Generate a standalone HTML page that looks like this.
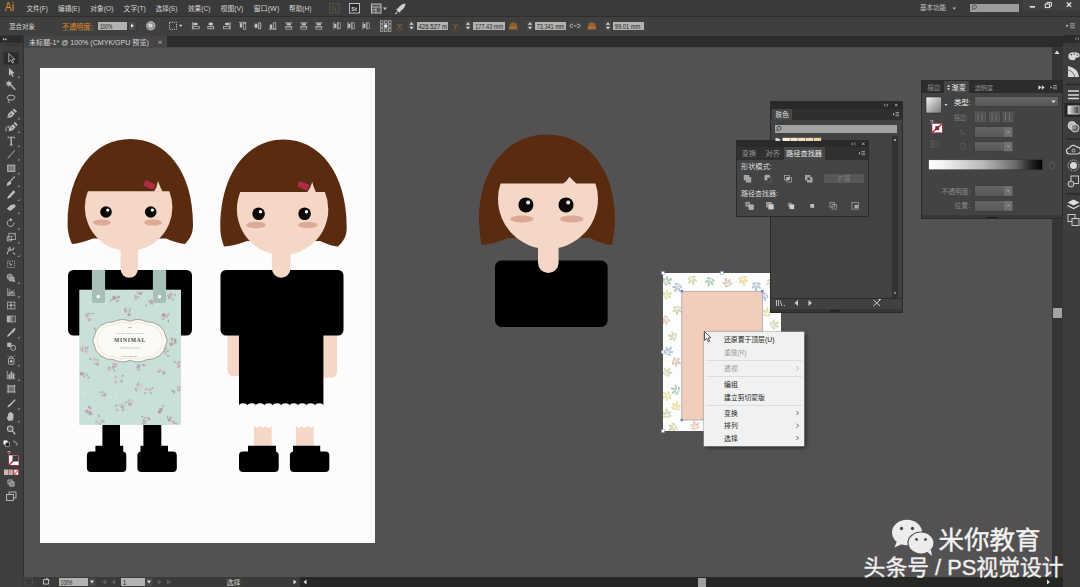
<!DOCTYPE html>
<html lang="zh"><head><meta charset="utf-8"><title>Adobe Illustrator</title>
<style>
html,body{margin:0;padding:0;background:#535152;}
body{width:1080px;height:587px;overflow:hidden;position:relative;font-family:"Liberation Sans",sans-serif;}
#app{position:absolute;left:0;top:0;width:1080px;height:587px;overflow:hidden;background:#535152;}
.abs{position:absolute;}
#menubar{left:0;top:0;width:1080px;height:16px;background:#3a3a3a;}
#ctrlbar{left:0;top:16px;width:1080px;height:19.5px;background:#3f403e;border-top:1px solid #2e2e2e;box-sizing:border-box;}
#tabbar{left:22px;top:35.5px;width:1041px;height:11.5px;background:#2c2c2c;}
#doctab{left:24px;top:36.3px;width:142.5px;height:11px;background:#454545;}
#tabline{left:23px;top:47px;width:1029px;height:1px;background:#474747;}
#toolbar{left:0;top:35px;width:22.5px;height:552px;background:#3e3e3e;border-right:1px solid #303030;}
#canvas{left:23px;top:47px;width:1030px;height:528px;background:#535152;}
#artboard{left:39.8px;top:68.3px;width:335.6px;height:475.2px;background:#fdfbfb;}
#vscroll{left:1052px;top:47px;width:11px;height:529.5px;background:#353535;}
#dock{left:1063px;top:35px;width:17px;height:552px;background:#3d3d3d;}
#statusbar{left:23px;top:576.5px;width:1040px;height:10.5px;background:#242723;}
#statusl{left:23px;top:576.5px;width:277px;height:10.5px;background:#3a3b39;}
.inp{background:#b2b2b2;color:#101010;font-family:"Liberation Mono",monospace;font-size:6.6px;font-weight:bold;letter-spacing:-0.3px;line-height:9px;height:8.8px;overflow:hidden;white-space:nowrap;box-sizing:border-box;padding-left:1px;}
.panel{background:#434343;box-shadow:0 0 0 1px #2a2a2a;}
.dd{background:linear-gradient(#646464,#585858);box-shadow:0 0 0 0.5px #3a3a3a;}
#ctx{left:703.5px;top:331.5px;width:100.5px;height:114px;background:#f1f1f1;box-shadow:0 0 0 0.5px #a9a9a9, 2px 2px 4px rgba(0,0,0,.5);}
.sep{position:absolute;left:2px;right:2px;height:1px;background:#dcdcdc;}
svg{position:absolute;left:0;top:0;overflow:visible;}
</style></head><body><div id="app">
<div id="canvas" class="abs"></div><div id="artboard" class="abs"></div><div id="vscroll" class="abs"><div class="abs" style="left:1px;top:260.5px;width:9px;height:10px;background:#a3a3a3"></div></div><div id="menubar" class="abs"></div><div id="ctrlbar" class="abs"></div><div id="tabbar" class="abs"></div><div id="doctab" class="abs"></div><div id="tabline" class="abs"></div><div id="toolbar" class="abs"></div><div id="dock" class="abs"></div><div id="statusbar" class="abs"></div><div id="statusl" class="abs"></div><svg width="1080" height="587" viewBox="0 0 1080 587"><defs><clipPath id="cf"><rect x="-80" y="52" width="160" height="100"/></clipPath><linearGradient id="gsw" x1="0" y1="0" x2="1" y2="1"><stop offset="0" stop-color="#f4f4f4"/><stop offset="1" stop-color="#777"/></linearGradient><linearGradient id="gbar" x1="0" y1="0" x2="1" y2="0"><stop offset="0" stop-color="#fff"/><stop offset="0.12" stop-color="#f4f4f4"/><stop offset="0.5" stop-color="#b4b4b4"/><stop offset="0.76" stop-color="#6c6c6c"/><stop offset="0.9" stop-color="#262626"/><stop offset="1" stop-color="#000"/></linearGradient><clipPath id="cap"><rect x="79.3" y="289.7" width="101.700" height="135.300"/></clipPath><clipPath id="cpat"><rect x="663" y="273" width="118" height="158"/></clipPath></defs><g id="girl1"><rect x="102.4" y="420" width="17.6" height="30" fill="#000"/><rect x="143.4" y="420" width="17.9" height="30" fill="#000"/><path fill="#000" d="M95.4,445.8 H123.2 V451.5 H122.3 a4,4 0 0 1 4,4 V468 a4,4 0 0 1 -4,4 H90.9 a4,4 0 0 1 -4,-4 V455.5 a4,4 0 0 1 4,-4 H95.4Z"/><path fill="#000" d="M140.5,445.8 H168 V451.5 H172.8 a4,4 0 0 1 4,4 V468 a4,4 0 0 1 -4,4 H141.4 a4,4 0 0 1 -4,-4 V455.5 a4,4 0 0 1 4,-4 H140.5Z"/><rect x="68" y="270" width="124" height="65.5" rx="5.5" fill="#000"/><rect x="79.300" y="289.700" width="101.700" height="135.300" fill="#c9dfd9"/><g clip-path="url(#cap)"><circle cx="87.8" cy="316.1" r="1.0" fill="#cfaab8" opacity="0.85"/><circle cx="89.4" cy="319.8" r="1.8" fill="#c9a3b3" opacity="0.85"/><circle cx="86.8" cy="316.8" r="1.3" fill="#d4b3c0" opacity="0.85"/><circle cx="86.7" cy="315.4" r="1.4" fill="#d4b3c0" opacity="0.85"/><circle cx="87.3" cy="319.4" r="1.1" fill="#dcc3cc" opacity="0.85"/><ellipse cx="92.7" cy="313.7" rx="1.5" ry="0.7" fill="#9db3a5" transform="rotate(158 92.7 313.7)"/><ellipse cx="89.1" cy="313.7" rx="1.5" ry="0.7" fill="#9db3a5" transform="rotate(1 89.1 313.7)"/><ellipse cx="86.8" cy="314.4" rx="1.5" ry="0.7" fill="#9db3a5" transform="rotate(42 86.8 314.4)"/><circle cx="135.8" cy="298.0" r="1.8" fill="#cfaab8" opacity="0.85"/><circle cx="138.4" cy="293.0" r="1.9" fill="#d4b3c0" opacity="0.85"/><circle cx="140.4" cy="293.7" r="1.4" fill="#bf92a6" opacity="0.85"/><ellipse cx="141.8" cy="292.9" rx="1.5" ry="0.7" fill="#9db3a5" transform="rotate(84 141.8 292.9)"/><ellipse cx="135.4" cy="295.9" rx="1.5" ry="0.7" fill="#9db3a5" transform="rotate(0 135.4 295.9)"/><ellipse cx="138.4" cy="296.9" rx="1.5" ry="0.7" fill="#9db3a5" transform="rotate(16 138.4 296.9)"/><circle cx="162.9" cy="315.8" r="1.2" fill="#bf92a6" opacity="0.85"/><circle cx="163.8" cy="314.9" r="1.9" fill="#bf92a6" opacity="0.85"/><circle cx="160.4" cy="318.6" r="1.0" fill="#dcc3cc" opacity="0.85"/><circle cx="166.2" cy="316.1" r="1.8" fill="#cfaab8" opacity="0.85"/><ellipse cx="163.5" cy="318.9" rx="1.5" ry="0.7" fill="#9db3a5" transform="rotate(159 163.5 318.9)"/><ellipse cx="168.6" cy="314.3" rx="1.5" ry="0.7" fill="#9db3a5" transform="rotate(62 168.6 314.3)"/><ellipse cx="168.3" cy="321.0" rx="1.5" ry="0.7" fill="#9db3a5" transform="rotate(88 168.3 321.0)"/><circle cx="113.9" cy="299.7" r="1.1" fill="#dcc3cc" opacity="0.85"/><circle cx="116.9" cy="301.4" r="1.0" fill="#bf92a6" opacity="0.85"/><circle cx="118.4" cy="296.9" r="1.5" fill="#bf92a6" opacity="0.85"/><circle cx="114.0" cy="297.2" r="1.8" fill="#bf92a6" opacity="0.85"/><circle cx="115.3" cy="298.3" r="1.3" fill="#bf92a6" opacity="0.85"/><ellipse cx="118.0" cy="300.6" rx="1.5" ry="0.7" fill="#9db3a5" transform="rotate(176 118.0 300.6)"/><ellipse cx="113.1" cy="299.4" rx="1.5" ry="0.7" fill="#9db3a5" transform="rotate(12 113.1 299.4)"/><ellipse cx="110.8" cy="300.4" rx="1.5" ry="0.7" fill="#9db3a5" transform="rotate(103 110.8 300.4)"/><circle cx="169.5" cy="297.6" r="1.4" fill="#bf92a6" opacity="0.85"/><circle cx="170.9" cy="294.2" r="1.7" fill="#c9a3b3" opacity="0.85"/><circle cx="170.2" cy="295.1" r="1.9" fill="#cfaab8" opacity="0.85"/><ellipse cx="172.8" cy="299.6" rx="1.5" ry="0.7" fill="#9db3a5" transform="rotate(27 172.8 299.6)"/><ellipse cx="168.2" cy="295.9" rx="1.5" ry="0.7" fill="#9db3a5" transform="rotate(15 168.2 295.9)"/><ellipse cx="174.9" cy="295.2" rx="1.5" ry="0.7" fill="#9db3a5" transform="rotate(116 174.9 295.2)"/><circle cx="86.7" cy="352.0" r="1.9" fill="#dcc3cc" opacity="0.85"/><circle cx="85.4" cy="347.8" r="1.3" fill="#bf92a6" opacity="0.85"/><circle cx="83.3" cy="346.7" r="1.7" fill="#dcc3cc" opacity="0.85"/><circle cx="84.2" cy="346.9" r="1.8" fill="#dcc3cc" opacity="0.85"/><circle cx="81.6" cy="348.9" r="1.7" fill="#cfaab8" opacity="0.85"/><ellipse cx="87.7" cy="347.8" rx="1.5" ry="0.7" fill="#9db3a5" transform="rotate(91 87.7 347.8)"/><ellipse cx="85.9" cy="350.5" rx="1.5" ry="0.7" fill="#9db3a5" transform="rotate(78 85.9 350.5)"/><ellipse cx="82.6" cy="350.8" rx="1.5" ry="0.7" fill="#9db3a5" transform="rotate(71 82.6 350.8)"/><circle cx="171.2" cy="344.1" r="1.9" fill="#bf92a6" opacity="0.85"/><circle cx="171.8" cy="338.9" r="1.4" fill="#c9a3b3" opacity="0.85"/><circle cx="175.1" cy="339.9" r="1.4" fill="#bf92a6" opacity="0.85"/><circle cx="175.4" cy="341.9" r="1.3" fill="#bf92a6" opacity="0.85"/><ellipse cx="174.4" cy="343.1" rx="1.5" ry="0.7" fill="#9db3a5" transform="rotate(104 174.4 343.1)"/><ellipse cx="171.5" cy="344.1" rx="1.5" ry="0.7" fill="#9db3a5" transform="rotate(176 171.5 344.1)"/><ellipse cx="172.5" cy="339.8" rx="1.5" ry="0.7" fill="#9db3a5" transform="rotate(85 172.5 339.8)"/><circle cx="109.3" cy="369.1" r="1.8" fill="#d4b3c0" opacity="0.85"/><circle cx="115.3" cy="365.9" r="1.6" fill="#c9a3b3" opacity="0.85"/><circle cx="113.8" cy="363.9" r="1.5" fill="#cfaab8" opacity="0.85"/><circle cx="115.3" cy="364.7" r="1.7" fill="#cfaab8" opacity="0.85"/><circle cx="113.0" cy="367.4" r="1.2" fill="#c9a3b3" opacity="0.85"/><ellipse cx="112.9" cy="367.1" rx="1.5" ry="0.7" fill="#9db3a5" transform="rotate(46 112.9 367.1)"/><ellipse cx="109.2" cy="367.7" rx="1.5" ry="0.7" fill="#9db3a5" transform="rotate(161 109.2 367.7)"/><ellipse cx="114.2" cy="370.4" rx="1.5" ry="0.7" fill="#9db3a5" transform="rotate(57 114.2 370.4)"/><circle cx="81.6" cy="373.7" r="1.9" fill="#bf92a6" opacity="0.85"/><circle cx="84.9" cy="376.3" r="1.4" fill="#dcc3cc" opacity="0.85"/><circle cx="84.1" cy="376.7" r="1.2" fill="#cfaab8" opacity="0.85"/><ellipse cx="87.2" cy="374.9" rx="1.5" ry="0.7" fill="#9db3a5" transform="rotate(89 87.2 374.9)"/><ellipse cx="84.1" cy="374.0" rx="1.5" ry="0.7" fill="#9db3a5" transform="rotate(104 84.1 374.0)"/><ellipse cx="88.7" cy="377.7" rx="1.5" ry="0.7" fill="#9db3a5" transform="rotate(140 88.7 377.7)"/><circle cx="163.5" cy="372.3" r="1.1" fill="#bf92a6" opacity="0.85"/><circle cx="160.3" cy="371.0" r="1.3" fill="#cfaab8" opacity="0.85"/><circle cx="158.9" cy="369.6" r="1.7" fill="#dcc3cc" opacity="0.85"/><circle cx="161.1" cy="371.2" r="1.1" fill="#d4b3c0" opacity="0.85"/><ellipse cx="158.8" cy="371.8" rx="1.5" ry="0.7" fill="#9db3a5" transform="rotate(50 158.8 371.8)"/><ellipse cx="164.7" cy="373.0" rx="1.5" ry="0.7" fill="#9db3a5" transform="rotate(89 164.7 373.0)"/><ellipse cx="163.2" cy="373.5" rx="1.5" ry="0.7" fill="#9db3a5" transform="rotate(97 163.2 373.5)"/><circle cx="136.1" cy="388.7" r="1.1" fill="#cfaab8" opacity="0.85"/><circle cx="138.4" cy="388.5" r="1.4" fill="#dcc3cc" opacity="0.85"/><circle cx="141.0" cy="386.0" r="1.9" fill="#dcc3cc" opacity="0.85"/><ellipse cx="136.2" cy="390.2" rx="1.5" ry="0.7" fill="#9db3a5" transform="rotate(40 136.2 390.2)"/><ellipse cx="138.4" cy="383.8" rx="1.5" ry="0.7" fill="#9db3a5" transform="rotate(77 138.4 383.8)"/><ellipse cx="137.4" cy="385.2" rx="1.5" ry="0.7" fill="#9db3a5" transform="rotate(81 137.4 385.2)"/><circle cx="176.9" cy="362.6" r="1.0" fill="#dcc3cc" opacity="0.85"/><circle cx="178.2" cy="366.9" r="1.3" fill="#d4b3c0" opacity="0.85"/><circle cx="179.1" cy="366.1" r="1.4" fill="#c9a3b3" opacity="0.85"/><circle cx="177.5" cy="362.4" r="1.7" fill="#dcc3cc" opacity="0.85"/><ellipse cx="174.5" cy="361.9" rx="1.5" ry="0.7" fill="#9db3a5" transform="rotate(39 174.5 361.9)"/><ellipse cx="179.2" cy="362.1" rx="1.5" ry="0.7" fill="#9db3a5" transform="rotate(126 179.2 362.1)"/><ellipse cx="178.1" cy="363.8" rx="1.5" ry="0.7" fill="#9db3a5" transform="rotate(165 178.1 363.8)"/><circle cx="91.2" cy="413.5" r="1.7" fill="#c9a3b3" opacity="0.85"/><circle cx="86.8" cy="411.2" r="1.6" fill="#bf92a6" opacity="0.85"/><circle cx="90.1" cy="408.0" r="1.3" fill="#bf92a6" opacity="0.85"/><circle cx="90.2" cy="411.6" r="1.0" fill="#c9a3b3" opacity="0.85"/><circle cx="88.7" cy="412.2" r="1.8" fill="#c9a3b3" opacity="0.85"/><ellipse cx="88.8" cy="406.6" rx="1.5" ry="0.7" fill="#9db3a5" transform="rotate(109 88.8 406.6)"/><ellipse cx="89.2" cy="412.7" rx="1.5" ry="0.7" fill="#9db3a5" transform="rotate(161 89.2 412.7)"/><ellipse cx="89.8" cy="414.2" rx="1.5" ry="0.7" fill="#9db3a5" transform="rotate(98 89.8 414.2)"/><circle cx="159.2" cy="412.3" r="1.8" fill="#d4b3c0" opacity="0.85"/><circle cx="159.7" cy="411.7" r="1.8" fill="#bf92a6" opacity="0.85"/><circle cx="161.5" cy="409.6" r="1.6" fill="#bf92a6" opacity="0.85"/><circle cx="159.8" cy="408.8" r="1.4" fill="#d4b3c0" opacity="0.85"/><ellipse cx="160.5" cy="410.0" rx="1.5" ry="0.7" fill="#9db3a5" transform="rotate(84 160.5 410.0)"/><ellipse cx="160.4" cy="409.3" rx="1.5" ry="0.7" fill="#9db3a5" transform="rotate(138 160.4 409.3)"/><ellipse cx="163.1" cy="406.1" rx="1.5" ry="0.7" fill="#9db3a5" transform="rotate(58 163.1 406.1)"/><circle cx="123.0" cy="409.9" r="1.3" fill="#c9a3b3" opacity="0.85"/><circle cx="120.1" cy="405.2" r="1.6" fill="#dcc3cc" opacity="0.85"/><circle cx="117.2" cy="410.2" r="1.6" fill="#d4b3c0" opacity="0.85"/><circle cx="123.1" cy="405.5" r="1.9" fill="#d4b3c0" opacity="0.85"/><ellipse cx="122.7" cy="407.4" rx="1.5" ry="0.7" fill="#9db3a5" transform="rotate(46 122.7 407.4)"/><ellipse cx="121.7" cy="407.2" rx="1.5" ry="0.7" fill="#9db3a5" transform="rotate(41 121.7 407.2)"/><ellipse cx="116.3" cy="405.4" rx="1.5" ry="0.7" fill="#9db3a5" transform="rotate(142 116.3 405.4)"/><circle cx="105.2" cy="395.6" r="1.1" fill="#bf92a6" opacity="0.85"/><circle cx="104.6" cy="395.6" r="1.1" fill="#cfaab8" opacity="0.85"/><circle cx="103.5" cy="392.8" r="1.4" fill="#cfaab8" opacity="0.85"/><ellipse cx="102.5" cy="395.4" rx="1.5" ry="0.7" fill="#9db3a5" transform="rotate(14 102.5 395.4)"/><ellipse cx="100.4" cy="392.2" rx="1.5" ry="0.7" fill="#9db3a5" transform="rotate(145 100.4 392.2)"/><ellipse cx="105.3" cy="394.1" rx="1.5" ry="0.7" fill="#9db3a5" transform="rotate(142 105.3 394.1)"/><circle cx="177.9" cy="387.5" r="1.2" fill="#cfaab8" opacity="0.85"/><circle cx="179.5" cy="387.6" r="1.7" fill="#d4b3c0" opacity="0.85"/><circle cx="179.8" cy="388.7" r="1.2" fill="#dcc3cc" opacity="0.85"/><circle cx="178.6" cy="390.0" r="1.5" fill="#c9a3b3" opacity="0.85"/><circle cx="173.5" cy="391.3" r="1.5" fill="#cfaab8" opacity="0.85"/><ellipse cx="174.4" cy="392.4" rx="1.5" ry="0.7" fill="#9db3a5" transform="rotate(122 174.4 392.4)"/><ellipse cx="181.6" cy="385.5" rx="1.5" ry="0.7" fill="#9db3a5" transform="rotate(135 181.6 385.5)"/><ellipse cx="172.3" cy="391.0" rx="1.5" ry="0.7" fill="#9db3a5" transform="rotate(13 172.3 391.0)"/><circle cx="144.4" cy="365.5" r="1.7" fill="#d4b3c0" opacity="0.85"/><circle cx="137.8" cy="368.6" r="1.7" fill="#dcc3cc" opacity="0.85"/><circle cx="138.3" cy="366.8" r="1.8" fill="#bf92a6" opacity="0.85"/><ellipse cx="138.9" cy="369.9" rx="1.5" ry="0.7" fill="#9db3a5" transform="rotate(180 138.9 369.9)"/><ellipse cx="139.5" cy="365.0" rx="1.5" ry="0.7" fill="#9db3a5" transform="rotate(34 139.5 365.0)"/><ellipse cx="143.2" cy="364.7" rx="1.5" ry="0.7" fill="#9db3a5" transform="rotate(75 143.2 364.7)"/><circle cx="97.5" cy="334.3" r="1.0" fill="#cfaab8" opacity="0.85"/><circle cx="101.7" cy="330.2" r="1.4" fill="#d4b3c0" opacity="0.85"/><circle cx="94.9" cy="329.0" r="1.2" fill="#d4b3c0" opacity="0.85"/><circle cx="97.9" cy="334.8" r="1.0" fill="#bf92a6" opacity="0.85"/><circle cx="97.8" cy="334.5" r="1.8" fill="#cfaab8" opacity="0.85"/><ellipse cx="96.2" cy="331.7" rx="1.5" ry="0.7" fill="#9db3a5" transform="rotate(49 96.2 331.7)"/><ellipse cx="94.5" cy="328.9" rx="1.5" ry="0.7" fill="#9db3a5" transform="rotate(95 94.5 328.9)"/><ellipse cx="101.7" cy="335.3" rx="1.5" ry="0.7" fill="#9db3a5" transform="rotate(120 101.7 335.3)"/><circle cx="150.4" cy="301.5" r="1.7" fill="#d4b3c0" opacity="0.85"/><circle cx="151.3" cy="301.0" r="1.3" fill="#c9a3b3" opacity="0.85"/><circle cx="151.9" cy="302.8" r="1.6" fill="#c9a3b3" opacity="0.85"/><ellipse cx="151.7" cy="303.7" rx="1.5" ry="0.7" fill="#9db3a5" transform="rotate(39 151.7 303.7)"/><ellipse cx="146.2" cy="305.5" rx="1.5" ry="0.7" fill="#9db3a5" transform="rotate(74 146.2 305.5)"/><ellipse cx="149.5" cy="301.7" rx="1.5" ry="0.7" fill="#9db3a5" transform="rotate(41 149.5 301.7)"/><circle cx="125.7" cy="309.0" r="1.6" fill="#d4b3c0" opacity="0.85"/><circle cx="128.9" cy="314.6" r="1.6" fill="#bf92a6" opacity="0.85"/><circle cx="125.6" cy="311.1" r="1.7" fill="#c9a3b3" opacity="0.85"/><ellipse cx="130.2" cy="309.0" rx="1.5" ry="0.7" fill="#9db3a5" transform="rotate(61 130.2 309.0)"/><ellipse cx="124.8" cy="309.4" rx="1.5" ry="0.7" fill="#9db3a5" transform="rotate(11 124.8 309.4)"/><ellipse cx="129.5" cy="311.4" rx="1.5" ry="0.7" fill="#9db3a5" transform="rotate(69 129.5 311.4)"/><circle cx="99.7" cy="419.7" r="1.2" fill="#dcc3cc" opacity="0.85"/><circle cx="96.5" cy="422.1" r="1.5" fill="#cfaab8" opacity="0.85"/><circle cx="103.3" cy="421.4" r="1.8" fill="#d4b3c0" opacity="0.85"/><ellipse cx="99.9" cy="423.9" rx="1.5" ry="0.7" fill="#9db3a5" transform="rotate(13 99.9 423.9)"/><ellipse cx="101.8" cy="421.3" rx="1.5" ry="0.7" fill="#9db3a5" transform="rotate(127 101.8 421.3)"/><ellipse cx="99.0" cy="416.0" rx="1.5" ry="0.7" fill="#9db3a5" transform="rotate(65 99.0 416.0)"/><circle cx="144.6" cy="421.9" r="1.9" fill="#c9a3b3" opacity="0.85"/><circle cx="142.7" cy="422.3" r="1.2" fill="#dcc3cc" opacity="0.85"/><circle cx="143.0" cy="423.7" r="1.1" fill="#c9a3b3" opacity="0.85"/><circle cx="148.7" cy="418.8" r="1.8" fill="#c9a3b3" opacity="0.85"/><ellipse cx="142.1" cy="416.7" rx="1.5" ry="0.7" fill="#9db3a5" transform="rotate(138 142.1 416.7)"/><ellipse cx="143.6" cy="420.3" rx="1.5" ry="0.7" fill="#9db3a5" transform="rotate(96 143.6 420.3)"/><ellipse cx="145.2" cy="417.7" rx="1.5" ry="0.7" fill="#9db3a5" transform="rotate(3 145.2 417.7)"/><circle cx="173.4" cy="422.5" r="1.5" fill="#d4b3c0" opacity="0.85"/><circle cx="169.3" cy="419.9" r="1.7" fill="#bf92a6" opacity="0.85"/><circle cx="170.6" cy="417.6" r="1.4" fill="#c9a3b3" opacity="0.85"/><circle cx="173.5" cy="421.9" r="1.6" fill="#cfaab8" opacity="0.85"/><ellipse cx="169.8" cy="419.9" rx="1.5" ry="0.7" fill="#9db3a5" transform="rotate(63 169.8 419.9)"/><ellipse cx="167.5" cy="417.3" rx="1.5" ry="0.7" fill="#9db3a5" transform="rotate(73 167.5 417.3)"/><ellipse cx="175.8" cy="423.5" rx="1.5" ry="0.7" fill="#9db3a5" transform="rotate(18 175.8 423.5)"/><circle cx="133.0" cy="401.2" r="1.0" fill="#cfaab8" opacity="0.85"/><circle cx="129.4" cy="404.8" r="1.5" fill="#d4b3c0" opacity="0.85"/><circle cx="130.6" cy="404.0" r="1.7" fill="#c9a3b3" opacity="0.85"/><circle cx="132.5" cy="400.5" r="1.5" fill="#dcc3cc" opacity="0.85"/><ellipse cx="129.2" cy="400.3" rx="1.5" ry="0.7" fill="#9db3a5" transform="rotate(35 129.2 400.3)"/><ellipse cx="128.6" cy="403.6" rx="1.5" ry="0.7" fill="#9db3a5" transform="rotate(73 128.6 403.6)"/><ellipse cx="126.3" cy="402.4" rx="1.5" ry="0.7" fill="#9db3a5" transform="rotate(142 126.3 402.4)"/><circle cx="146.4" cy="389.1" r="1.7" fill="#d4b3c0" opacity="0.85"/><circle cx="149.5" cy="390.5" r="1.0" fill="#cfaab8" opacity="0.85"/><circle cx="150.2" cy="389.6" r="1.3" fill="#d4b3c0" opacity="0.85"/><ellipse cx="145.1" cy="392.8" rx="1.5" ry="0.7" fill="#9db3a5" transform="rotate(41 145.1 392.8)"/><ellipse cx="152.3" cy="388.4" rx="1.5" ry="0.7" fill="#9db3a5" transform="rotate(135 152.3 388.4)"/><ellipse cx="151.1" cy="393.2" rx="1.5" ry="0.7" fill="#9db3a5" transform="rotate(36 151.1 393.2)"/><circle cx="120.0" cy="379.6" r="1.1" fill="#dcc3cc" opacity="0.85"/><circle cx="116.6" cy="382.7" r="1.5" fill="#dcc3cc" opacity="0.85"/><circle cx="115.5" cy="377.1" r="1.5" fill="#d4b3c0" opacity="0.85"/><circle cx="121.6" cy="380.6" r="1.1" fill="#c9a3b3" opacity="0.85"/><ellipse cx="121.5" cy="381.7" rx="1.5" ry="0.7" fill="#9db3a5" transform="rotate(53 121.5 381.7)"/><ellipse cx="122.8" cy="375.8" rx="1.5" ry="0.7" fill="#9db3a5" transform="rotate(147 122.8 375.8)"/><ellipse cx="115.4" cy="381.8" rx="1.5" ry="0.7" fill="#9db3a5" transform="rotate(90 115.4 381.8)"/><circle cx="94.7" cy="360.1" r="1.3" fill="#d4b3c0" opacity="0.85"/><circle cx="95.1" cy="363.7" r="1.3" fill="#d4b3c0" opacity="0.85"/><circle cx="97.3" cy="364.0" r="1.6" fill="#c9a3b3" opacity="0.85"/><circle cx="94.2" cy="359.7" r="1.4" fill="#d4b3c0" opacity="0.85"/><ellipse cx="90.4" cy="359.0" rx="1.5" ry="0.7" fill="#9db3a5" transform="rotate(25 90.4 359.0)"/><ellipse cx="97.5" cy="360.0" rx="1.5" ry="0.7" fill="#9db3a5" transform="rotate(51 97.5 360.0)"/><ellipse cx="98.0" cy="364.3" rx="1.5" ry="0.7" fill="#9db3a5" transform="rotate(122 98.0 364.3)"/><circle cx="164.8" cy="352.2" r="1.7" fill="#c9a3b3" opacity="0.85"/><circle cx="164.1" cy="348.9" r="1.5" fill="#cfaab8" opacity="0.85"/><circle cx="165.9" cy="354.0" r="1.3" fill="#c9a3b3" opacity="0.85"/><circle cx="161.4" cy="350.8" r="1.5" fill="#dcc3cc" opacity="0.85"/><circle cx="165.3" cy="353.2" r="1.9" fill="#dcc3cc" opacity="0.85"/><ellipse cx="168.2" cy="355.8" rx="1.5" ry="0.7" fill="#9db3a5" transform="rotate(177 168.2 355.8)"/><ellipse cx="165.6" cy="348.1" rx="1.5" ry="0.7" fill="#9db3a5" transform="rotate(37 165.6 348.1)"/><ellipse cx="168.0" cy="350.8" rx="1.5" ry="0.7" fill="#9db3a5" transform="rotate(151 168.0 350.8)"/><circle cx="83.0" cy="393.6" r="0.55" fill="#eef7f4"/><circle cx="101.5" cy="329.8" r="0.55" fill="#eef7f4"/><circle cx="83.7" cy="394.1" r="0.55" fill="#eef7f4"/><circle cx="141.5" cy="405.9" r="0.55" fill="#eef7f4"/><circle cx="174.2" cy="346.5" r="0.55" fill="#eef7f4"/><circle cx="176.9" cy="293.9" r="0.55" fill="#eef7f4"/><circle cx="173.0" cy="322.9" r="0.55" fill="#eef7f4"/><circle cx="84.7" cy="303.7" r="0.55" fill="#eef7f4"/><circle cx="176.2" cy="331.7" r="0.55" fill="#eef7f4"/><circle cx="115.8" cy="397.8" r="0.55" fill="#eef7f4"/><circle cx="173.3" cy="372.0" r="0.55" fill="#eef7f4"/><circle cx="136.6" cy="355.8" r="0.55" fill="#eef7f4"/><circle cx="90.1" cy="308.0" r="0.55" fill="#eef7f4"/><circle cx="114.9" cy="395.7" r="0.55" fill="#eef7f4"/><circle cx="122.9" cy="419.9" r="0.55" fill="#eef7f4"/><circle cx="147.4" cy="341.9" r="0.55" fill="#eef7f4"/><circle cx="155.3" cy="361.7" r="0.55" fill="#eef7f4"/><circle cx="101.5" cy="381.4" r="0.55" fill="#eef7f4"/><circle cx="112.8" cy="334.8" r="0.55" fill="#eef7f4"/><circle cx="164.5" cy="409.4" r="0.55" fill="#eef7f4"/><circle cx="149.1" cy="421.9" r="0.55" fill="#eef7f4"/><circle cx="105.7" cy="305.2" r="0.55" fill="#eef7f4"/><circle cx="110.1" cy="397.3" r="0.55" fill="#eef7f4"/><circle cx="159.9" cy="302.3" r="0.55" fill="#eef7f4"/><circle cx="175.1" cy="302.1" r="0.55" fill="#eef7f4"/><circle cx="121.9" cy="316.5" r="0.55" fill="#eef7f4"/><circle cx="145.9" cy="367.2" r="0.55" fill="#eef7f4"/><circle cx="143.0" cy="376.5" r="0.55" fill="#eef7f4"/><circle cx="135.0" cy="345.7" r="0.55" fill="#eef7f4"/><circle cx="103.8" cy="355.8" r="0.55" fill="#eef7f4"/><circle cx="140.0" cy="324.3" r="0.55" fill="#eef7f4"/><circle cx="122.4" cy="303.1" r="0.55" fill="#eef7f4"/><circle cx="169.1" cy="335.7" r="0.55" fill="#eef7f4"/><circle cx="122.8" cy="311.7" r="0.55" fill="#eef7f4"/><circle cx="110.3" cy="365.3" r="0.55" fill="#eef7f4"/><circle cx="136.8" cy="349.3" r="0.55" fill="#eef7f4"/><circle cx="113.3" cy="305.5" r="0.55" fill="#eef7f4"/><circle cx="158.9" cy="335.6" r="0.55" fill="#eef7f4"/><circle cx="88.5" cy="417.7" r="0.55" fill="#eef7f4"/><circle cx="94.6" cy="360.6" r="0.55" fill="#eef7f4"/></g><path fill="#a7bfb8" d="M91.900,270 h13.200 v31 a2,2 0 0 1 -2,2 h-9.200 a2,2 0 0 1 -2,-2Z"/><path fill="#a7bfb8" d="M152.900,270 h13.200 v31 a2,2 0 0 1 -2,2 h-9.200 a2,2 0 0 1 -2,-2Z"/><circle cx="98.300" cy="296.700" r="2.400" fill="#f3f8f6" stroke="#8fa8a1" stroke-width="0.700"/><circle cx="159.400" cy="296.700" r="2.400" fill="#f3f8f6" stroke="#8fa8a1" stroke-width="0.700"/><g transform="translate(130,340.2) scale(0.98,1.08) translate(-130,-338)"><path fill="#fbfaf5" stroke="#8d8272" stroke-width="0.7" d="M130,320.5 q8,-3.5 17,0.5 q6,-0.5 13,3.5 q6,5 6.5,10 q3,4 0,8 q-0.5,5 -6.5,10 q-7,4 -13,3.5 q-9,4 -17,0.5 q-8,3.5 -17,-0.5 q-6,0.5 -13,-3.5 q-6,-5 -6.5,-10 q-3,-4 0,-8 q0.5,-5 6.5,-10 q7,-4 13,-3.5 q9,-4 17,-0.5Z"/><path fill="none" stroke="#d2ccb9" stroke-width="0.4" d="M130,323 q8,-3 16,0.5 q5,-0.5 11,3 q5,4 5.5,8.5 q2.5,3.5 0,7 q-0.5,4.500 -5.500,8.500 q-6,3.500 -11,3 q-8,3.500 -16,0.500 q-8,3 -16,-0.500 q-5,0.500 -11,-3 q-5,-4 -5.500,-8.500 q-2.500,-3.500 0,-7 q0.500,-4.500 5.500,-8.500 q6,-3.500 11,-3 q8,-3.500 16,-0.500Z"/></g><text x="130" y="342.200" text-anchor="middle" font-family="Liberation Serif" font-weight="bold" font-size="5.600" letter-spacing="0.750" fill="#4a4a4a">MINIMAL</text><text x="130" y="334.300" text-anchor="middle" font-family="Liberation Sans" font-size="1.900" letter-spacing="0.300" fill="#8a8a8a">THE SEASON OF BLOOM</text><text x="130" y="329.300" text-anchor="middle" font-family="Liberation Sans" font-size="2.600" letter-spacing="0.300" fill="#555">•••</text><text x="130" y="349" text-anchor="middle" font-family="Liberation Serif" font-style="italic" font-size="3.200" fill="#b9b9b9">Stationery store</text><text x="130" y="356.500" text-anchor="middle" font-family="Liberation Serif" font-weight="bold" font-size="2.800" letter-spacing="0.300" fill="#777">FLOWER</text></g><g id="girl2"><path fill="#f4d7c6" d="M227.5,330 h12 v46 h-6.500 a5.500,5.500 0 0 1 -5.500,-5.500Z"/><path fill="#f4d7c6" d="M337,330 h-15 v47.500 h9.500 a5.500,5.500 0 0 0 5.500,-5.500Z"/><path fill="#f4d7c6" d="M254,448 V426 l2.950,2.300 2.950,-2.300 2.950,2.300 2.950,-2.300 2.950,2.300 2.950,-2.300 V448Z"/><path fill="#f4d7c6" d="M296,448 V426 l2.950,2.300 2.950,-2.300 2.950,2.300 2.950,-2.300 2.950,2.300 2.950,-2.300 V448Z"/><path fill="#000" d="M248,445.8 H276 V451.5 H274.7 a4,4 0 0 1 4,4 V468 a4,4 0 0 1 -4,4 H243 a4,4 0 0 1 -4,-4 V455.5 a4,4 0 0 1 4,-4 H248Z"/><path fill="#000" d="M293,445.8 H320.2 V451.5 H325.3 a4,4 0 0 1 4,4 V468 a4,4 0 0 1 -4,4 H293.9 a4,4 0 0 1 -4,-4 V455.5 a4,4 0 0 1 4,-4 H293Z"/><path fill="#000" d="M226,270 h112 a5.500,5.500 0 0 1 5.500,5.500 v54.500 a5.500,5.500 0 0 1 -5.500,5.500 h-14.600 V405.800 a4.220,2.500 0 0 0 -8.440,0 a4.220,2.500 0 0 0 -8.440,0 a4.220,2.500 0 0 0 -8.440,0 a4.220,2.500 0 0 0 -8.440,0 a4.220,2.500 0 0 0 -8.440,0 a4.220,2.500 0 0 0 -8.440,0 a4.220,2.500 0 0 0 -8.440,0 a4.220,2.500 0 0 0 -8.440,0 a4.220,2.500 0 0 0 -8.440,0 a4.220,2.500 0 0 0 -8.440,0 V335.500 h-13 a5.500,5.500 0 0 1 -5.500,-5.500 v-54.500 a5.500,5.500 0 0 1 5.500,-5.500Z"/></g><rect x="495" y="260.500" width="112.600" height="66.500" rx="6.500" fill="#000"/><path fill="#592c10" d="M72,244 C69.10000000000001,237 67.60000000000001,232 67.60000000000001,224 C67.60000000000001,171.3 94.6,139 130.3,139 C166.0,139 193.0,171.3 193.0,224 C193.0,232 191.5,237 185,244 Q177.5,243.5 166,238.6 L93,238.6 Q80.5,243.5 72,244Z"/><path fill="#f4d7c6" d="M120.6,243.10000000000002 L138,243.10000000000002 L138,269.1 A8.700000000000003,8.700000000000003 0 0 1 120.6,269.1Z"/><clipPath id="cf1"><rect x="82.8" y="191.3" width="91.6" height="87.6"/></clipPath><circle cx="128.6" cy="207.3" r="43.8" fill="#f4d7c6" clip-path="url(#cf1)"/><path fill="#f4d7c6" d="M154,191.8 Q157.0,187.15 158,181 Q159.75,186.15 162.5,191.8Z"/><rect x="-5.5" y="-3" width="11" height="6" rx="1" fill="#b02a4a" transform="translate(149.4,185) rotate(22)"/><circle cx="106" cy="212" r="5.8" fill="#0c0808"/><circle cx="107.7" cy="210.1" r="1.6" fill="#fff"/><circle cx="150.7" cy="212" r="5.8" fill="#0c0808"/><circle cx="152.4" cy="210.1" r="1.6" fill="#fff"/><ellipse cx="102" cy="222.5" rx="8.8" ry="3.1" fill="#dca996"/><ellipse cx="153" cy="222.5" rx="8.8" ry="3.1" fill="#dca996"/><path fill="#592c10" d="M224,246.5 C221.8,239.5 220.3,235 220.3,227 C220.3,172.8 247.5,139.5 283.5,139.5 C319.5,139.5 346.7,172.8 346.7,227 C346.7,235 345.2,239.5 338,246.5 Q331.0,246.0 320,241 L247,241 Q233.5,246.0 224,246.5Z"/><path fill="#f4d7c6" d="M271.9,247.0 L290.5,247.0 L290.5,268.5 A9.300000000000011,9.300000000000011 0 0 1 271.9,268.5Z"/><clipPath id="cf2"><rect x="234.90000000000003" y="192" width="95.4" height="91.4"/></clipPath><circle cx="282.6" cy="209.3" r="45.7" fill="#f4d7c6" clip-path="url(#cf2)"/><path fill="#f4d7c6" d="M307,192.5 Q310.6,187.95 312.2,181.9 Q313.6,186.95 316,192.5Z"/><rect x="-5.5" y="-3" width="11" height="6" rx="1" fill="#b02a4a" transform="translate(303.3,185.7) rotate(22)"/><circle cx="258.6" cy="213.8" r="6.3" fill="#0c0808"/><circle cx="260.5" cy="211.7" r="1.7" fill="#fff"/><circle cx="304.6" cy="213.8" r="6.3" fill="#0c0808"/><circle cx="306.5" cy="211.7" r="1.7" fill="#fff"/><ellipse cx="256" cy="225" rx="9.7" ry="3.3" fill="#dca996"/><ellipse cx="307.9" cy="225" rx="9.7" ry="3.3" fill="#dca996"/><path fill="#592c10" d="M481.4,245 C480.5,238 479,228 479,220 C479,167.0 508.2,134.5 547,134.5 C585.8,134.5 615,167.0 615,220 C615,228 613.5,238 611.7,245 Q602.85,244.5 590,238 L508,238 Q492.7,244.5 481.4,245Z"/><path fill="#f4d7c6" d="M538,241 L558.6,241 L558.6,262.7 A10.300000000000011,10.300000000000011 0 0 1 538,262.7Z"/><clipPath id="cf3"><rect x="496" y="183.6" width="104" height="100"/></clipPath><circle cx="548" cy="199" r="50" fill="#f4d7c6" clip-path="url(#cf3)"/><path fill="#f4d7c6" d="M562.7,184.1 Q567.1,181.2 569.5,176.8 Q572.65,180.2 576.8,184.1Z"/><circle cx="525.9" cy="204.9" r="7.5" fill="#0c0808"/><circle cx="528.1" cy="202.4" r="2.0" fill="#fff"/><circle cx="566" cy="204.9" r="7.5" fill="#0c0808"/><circle cx="568.2" cy="202.4" r="2.0" fill="#fff"/><ellipse cx="521.8" cy="219" rx="11.7" ry="3.6" fill="#dca996"/><ellipse cx="571.7" cy="219" rx="11.7" ry="3.6" fill="#dca996"/><rect x="663" y="273" width="118" height="158" fill="#fdfdfc"/><g clip-path="url(#cpat)"><g transform="translate(692.2,279.9) rotate(163)" fill="#b4c487" opacity="0.62"><ellipse cx="0" cy="-3" rx="1.2" ry="2.6"/><ellipse cx="-2.6" cy="-1" rx="1.1" ry="2.4" transform="rotate(-50 -2.6 -1)"/><ellipse cx="2.6" cy="-1" rx="1.1" ry="2.4" transform="rotate(50 2.6 -1)"/><ellipse cx="-2.4" cy="2.300" rx="1" ry="2" transform="rotate(-70 -2.4 2.3)"/><ellipse cx="2.4" cy="2.300" rx="1" ry="2" transform="rotate(70 2.4 2.3)"/><rect x="-0.250" y="-3" width="0.500" height="7.500"/></g><g transform="translate(710.0,281.4) rotate(202)" fill="#86ab97" opacity="0.62"><ellipse cx="0" cy="-3" rx="1.2" ry="2.6"/><ellipse cx="-2.6" cy="-1" rx="1.1" ry="2.4" transform="rotate(-50 -2.6 -1)"/><ellipse cx="2.6" cy="-1" rx="1.1" ry="2.4" transform="rotate(50 2.6 -1)"/><ellipse cx="-2.4" cy="2.300" rx="1" ry="2" transform="rotate(-70 -2.4 2.3)"/><ellipse cx="2.4" cy="2.300" rx="1" ry="2" transform="rotate(70 2.4 2.3)"/><rect x="-0.250" y="-3" width="0.500" height="7.500"/></g><g transform="translate(727.4,283.0) rotate(333)" fill="#c9a18c" opacity="0.62"><ellipse cx="0" cy="-3" rx="1.2" ry="2.6"/><ellipse cx="-2.6" cy="-1" rx="1.1" ry="2.4" transform="rotate(-50 -2.6 -1)"/><ellipse cx="2.6" cy="-1" rx="1.1" ry="2.4" transform="rotate(50 2.6 -1)"/><ellipse cx="-2.4" cy="2.300" rx="1" ry="2" transform="rotate(-70 -2.4 2.3)"/><ellipse cx="2.4" cy="2.300" rx="1" ry="2" transform="rotate(70 2.4 2.3)"/><rect x="-0.250" y="-3" width="0.500" height="7.500"/></g><g transform="translate(743.0,280.0) rotate(168)" fill="#e6c75c" opacity="0.62"><ellipse cx="0" cy="-3" rx="1.2" ry="2.6"/><ellipse cx="-2.6" cy="-1" rx="1.1" ry="2.4" transform="rotate(-50 -2.6 -1)"/><ellipse cx="2.6" cy="-1" rx="1.1" ry="2.4" transform="rotate(50 2.6 -1)"/><ellipse cx="-2.4" cy="2.300" rx="1" ry="2" transform="rotate(-70 -2.4 2.3)"/><ellipse cx="2.4" cy="2.300" rx="1" ry="2" transform="rotate(70 2.4 2.3)"/><rect x="-0.250" y="-3" width="0.500" height="7.500"/></g><g transform="translate(756.3,285.9) rotate(183)" fill="#8aa2bd" opacity="0.62"><ellipse cx="0" cy="-3" rx="1.2" ry="2.6"/><ellipse cx="-2.6" cy="-1" rx="1.1" ry="2.4" transform="rotate(-50 -2.6 -1)"/><ellipse cx="2.6" cy="-1" rx="1.1" ry="2.4" transform="rotate(50 2.6 -1)"/><ellipse cx="-2.4" cy="2.300" rx="1" ry="2" transform="rotate(-70 -2.4 2.3)"/><ellipse cx="2.4" cy="2.300" rx="1" ry="2" transform="rotate(70 2.4 2.3)"/><rect x="-0.250" y="-3" width="0.500" height="7.500"/></g><g transform="translate(677.3,287.3) rotate(211)" fill="#8aa2bd" opacity="0.62"><ellipse cx="0" cy="-3" rx="1.2" ry="2.6"/><ellipse cx="-2.6" cy="-1" rx="1.1" ry="2.4" transform="rotate(-50 -2.6 -1)"/><ellipse cx="2.6" cy="-1" rx="1.1" ry="2.4" transform="rotate(50 2.6 -1)"/><ellipse cx="-2.4" cy="2.300" rx="1" ry="2" transform="rotate(-70 -2.4 2.3)"/><ellipse cx="2.4" cy="2.300" rx="1" ry="2" transform="rotate(70 2.4 2.3)"/><rect x="-0.250" y="-3" width="0.500" height="7.500"/></g><g transform="translate(667.0,294.8) rotate(66)" fill="#cdd07a" opacity="0.62"><ellipse cx="0" cy="-3" rx="1.2" ry="2.6"/><ellipse cx="-2.6" cy="-1" rx="1.1" ry="2.4" transform="rotate(-50 -2.6 -1)"/><ellipse cx="2.6" cy="-1" rx="1.1" ry="2.4" transform="rotate(50 2.6 -1)"/><ellipse cx="-2.4" cy="2.300" rx="1" ry="2" transform="rotate(-70 -2.4 2.3)"/><ellipse cx="2.4" cy="2.300" rx="1" ry="2" transform="rotate(70 2.4 2.3)"/><rect x="-0.250" y="-3" width="0.500" height="7.500"/></g><g transform="translate(677.3,309.7) rotate(184)" fill="#b4c487" opacity="0.62"><ellipse cx="0" cy="-3" rx="1.2" ry="2.6"/><ellipse cx="-2.6" cy="-1" rx="1.1" ry="2.4" transform="rotate(-50 -2.6 -1)"/><ellipse cx="2.6" cy="-1" rx="1.1" ry="2.4" transform="rotate(50 2.6 -1)"/><ellipse cx="-2.4" cy="2.300" rx="1" ry="2" transform="rotate(-70 -2.4 2.3)"/><ellipse cx="2.4" cy="2.300" rx="1" ry="2" transform="rotate(70 2.4 2.3)"/><rect x="-0.250" y="-3" width="0.500" height="7.500"/></g><g transform="translate(665.4,320.0) rotate(227)" fill="#e0a596" opacity="0.62"><ellipse cx="0" cy="-3" rx="1.2" ry="2.6"/><ellipse cx="-2.6" cy="-1" rx="1.1" ry="2.4" transform="rotate(-50 -2.6 -1)"/><ellipse cx="2.6" cy="-1" rx="1.1" ry="2.4" transform="rotate(50 2.6 -1)"/><ellipse cx="-2.4" cy="2.300" rx="1" ry="2" transform="rotate(-70 -2.4 2.3)"/><ellipse cx="2.4" cy="2.300" rx="1" ry="2" transform="rotate(70 2.4 2.3)"/><rect x="-0.250" y="-3" width="0.500" height="7.500"/></g><g transform="translate(673.0,336.5) rotate(285)" fill="#b4c487" opacity="0.62"><ellipse cx="0" cy="-3" rx="1.2" ry="2.6"/><ellipse cx="-2.6" cy="-1" rx="1.1" ry="2.4" transform="rotate(-50 -2.6 -1)"/><ellipse cx="2.6" cy="-1" rx="1.1" ry="2.4" transform="rotate(50 2.6 -1)"/><ellipse cx="-2.4" cy="2.300" rx="1" ry="2" transform="rotate(-70 -2.4 2.3)"/><ellipse cx="2.4" cy="2.300" rx="1" ry="2" transform="rotate(70 2.4 2.3)"/><rect x="-0.250" y="-3" width="0.500" height="7.500"/></g><g transform="translate(668.4,351.4) rotate(34)" fill="#8aa2bd" opacity="0.62"><ellipse cx="0" cy="-3" rx="1.2" ry="2.6"/><ellipse cx="-2.6" cy="-1" rx="1.1" ry="2.4" transform="rotate(-50 -2.6 -1)"/><ellipse cx="2.6" cy="-1" rx="1.1" ry="2.4" transform="rotate(50 2.6 -1)"/><ellipse cx="-2.4" cy="2.300" rx="1" ry="2" transform="rotate(-70 -2.4 2.3)"/><ellipse cx="2.4" cy="2.300" rx="1" ry="2" transform="rotate(70 2.4 2.3)"/><rect x="-0.250" y="-3" width="0.500" height="7.500"/></g><g transform="translate(675.9,361.8) rotate(109)" fill="#c9a18c" opacity="0.62"><ellipse cx="0" cy="-3" rx="1.2" ry="2.6"/><ellipse cx="-2.6" cy="-1" rx="1.1" ry="2.4" transform="rotate(-50 -2.6 -1)"/><ellipse cx="2.6" cy="-1" rx="1.1" ry="2.4" transform="rotate(50 2.6 -1)"/><ellipse cx="-2.4" cy="2.300" rx="1" ry="2" transform="rotate(-70 -2.4 2.3)"/><ellipse cx="2.4" cy="2.300" rx="1" ry="2" transform="rotate(70 2.4 2.3)"/><rect x="-0.250" y="-3" width="0.500" height="7.500"/></g><g transform="translate(667.0,372.3) rotate(33)" fill="#b4c487" opacity="0.62"><ellipse cx="0" cy="-3" rx="1.2" ry="2.6"/><ellipse cx="-2.6" cy="-1" rx="1.1" ry="2.4" transform="rotate(-50 -2.6 -1)"/><ellipse cx="2.6" cy="-1" rx="1.1" ry="2.4" transform="rotate(50 2.6 -1)"/><ellipse cx="-2.4" cy="2.300" rx="1" ry="2" transform="rotate(-70 -2.4 2.3)"/><ellipse cx="2.4" cy="2.300" rx="1" ry="2" transform="rotate(70 2.4 2.3)"/><rect x="-0.250" y="-3" width="0.500" height="7.500"/></g><g transform="translate(675.9,390.0) rotate(291)" fill="#86ab97" opacity="0.62"><ellipse cx="0" cy="-3" rx="1.2" ry="2.6"/><ellipse cx="-2.6" cy="-1" rx="1.1" ry="2.4" transform="rotate(-50 -2.6 -1)"/><ellipse cx="2.6" cy="-1" rx="1.1" ry="2.4" transform="rotate(50 2.6 -1)"/><ellipse cx="-2.4" cy="2.300" rx="1" ry="2" transform="rotate(-70 -2.4 2.3)"/><ellipse cx="2.4" cy="2.300" rx="1" ry="2" transform="rotate(70 2.4 2.3)"/><rect x="-0.250" y="-3" width="0.500" height="7.500"/></g><g transform="translate(667.0,396.0) rotate(250)" fill="#cdd07a" opacity="0.62"><ellipse cx="0" cy="-3" rx="1.2" ry="2.6"/><ellipse cx="-2.6" cy="-1" rx="1.1" ry="2.4" transform="rotate(-50 -2.6 -1)"/><ellipse cx="2.6" cy="-1" rx="1.1" ry="2.4" transform="rotate(50 2.6 -1)"/><ellipse cx="-2.4" cy="2.300" rx="1" ry="2" transform="rotate(-70 -2.4 2.3)"/><ellipse cx="2.4" cy="2.300" rx="1" ry="2" transform="rotate(70 2.4 2.3)"/><rect x="-0.250" y="-3" width="0.500" height="7.500"/></g><g transform="translate(676.0,406.5) rotate(15)" fill="#e6c75c" opacity="0.62"><ellipse cx="0" cy="-3" rx="1.2" ry="2.6"/><ellipse cx="-2.6" cy="-1" rx="1.1" ry="2.4" transform="rotate(-50 -2.6 -1)"/><ellipse cx="2.6" cy="-1" rx="1.1" ry="2.4" transform="rotate(50 2.6 -1)"/><ellipse cx="-2.4" cy="2.300" rx="1" ry="2" transform="rotate(-70 -2.4 2.3)"/><ellipse cx="2.4" cy="2.300" rx="1" ry="2" transform="rotate(70 2.4 2.3)"/><rect x="-0.250" y="-3" width="0.500" height="7.500"/></g><g transform="translate(667.0,414.0) rotate(354)" fill="#b4c487" opacity="0.62"><ellipse cx="0" cy="-3" rx="1.2" ry="2.6"/><ellipse cx="-2.6" cy="-1" rx="1.1" ry="2.4" transform="rotate(-50 -2.6 -1)"/><ellipse cx="2.6" cy="-1" rx="1.1" ry="2.4" transform="rotate(50 2.6 -1)"/><ellipse cx="-2.4" cy="2.300" rx="1" ry="2" transform="rotate(-70 -2.4 2.3)"/><ellipse cx="2.4" cy="2.300" rx="1" ry="2" transform="rotate(70 2.4 2.3)"/><rect x="-0.250" y="-3" width="0.500" height="7.500"/></g><g transform="translate(695.2,425.9) rotate(347)" fill="#e0a596" opacity="0.62"><ellipse cx="0" cy="-3" rx="1.2" ry="2.6"/><ellipse cx="-2.6" cy="-1" rx="1.1" ry="2.4" transform="rotate(-50 -2.6 -1)"/><ellipse cx="2.6" cy="-1" rx="1.1" ry="2.4" transform="rotate(50 2.6 -1)"/><ellipse cx="-2.4" cy="2.300" rx="1" ry="2" transform="rotate(-70 -2.4 2.3)"/><ellipse cx="2.4" cy="2.300" rx="1" ry="2" transform="rotate(70 2.4 2.3)"/><rect x="-0.250" y="-3" width="0.500" height="7.500"/></g><g transform="translate(673.0,427.4) rotate(235)" fill="#b4c487" opacity="0.62"><ellipse cx="0" cy="-3" rx="1.2" ry="2.6"/><ellipse cx="-2.6" cy="-1" rx="1.1" ry="2.4" transform="rotate(-50 -2.6 -1)"/><ellipse cx="2.6" cy="-1" rx="1.1" ry="2.4" transform="rotate(50 2.6 -1)"/><ellipse cx="-2.4" cy="2.300" rx="1" ry="2" transform="rotate(-70 -2.4 2.3)"/><ellipse cx="2.4" cy="2.300" rx="1" ry="2" transform="rotate(70 2.4 2.3)"/><rect x="-0.250" y="-3" width="0.500" height="7.500"/></g><g transform="translate(763.8,296.3) rotate(222)" fill="#8aa2bd" opacity="0.62"><ellipse cx="0" cy="-3" rx="1.2" ry="2.6"/><ellipse cx="-2.6" cy="-1" rx="1.1" ry="2.4" transform="rotate(-50 -2.6 -1)"/><ellipse cx="2.6" cy="-1" rx="1.1" ry="2.4" transform="rotate(50 2.6 -1)"/><ellipse cx="-2.4" cy="2.300" rx="1" ry="2" transform="rotate(-70 -2.4 2.3)"/><ellipse cx="2.4" cy="2.300" rx="1" ry="2" transform="rotate(70 2.4 2.3)"/><rect x="-0.250" y="-3" width="0.500" height="7.500"/></g><g transform="translate(774.2,324.6) rotate(57)" fill="#b4c487" opacity="0.62"><ellipse cx="0" cy="-3" rx="1.2" ry="2.6"/><ellipse cx="-2.6" cy="-1" rx="1.1" ry="2.4" transform="rotate(-50 -2.6 -1)"/><ellipse cx="2.6" cy="-1" rx="1.1" ry="2.4" transform="rotate(50 2.6 -1)"/><ellipse cx="-2.4" cy="2.300" rx="1" ry="2" transform="rotate(-70 -2.4 2.3)"/><ellipse cx="2.4" cy="2.300" rx="1" ry="2" transform="rotate(70 2.4 2.3)"/><rect x="-0.250" y="-3" width="0.500" height="7.500"/></g><g transform="translate(767.0,312.7) rotate(5)" fill="#cdd07a" opacity="0.62"><ellipse cx="0" cy="-3" rx="1.2" ry="2.6"/><ellipse cx="-2.6" cy="-1" rx="1.1" ry="2.4" transform="rotate(-50 -2.6 -1)"/><ellipse cx="2.6" cy="-1" rx="1.1" ry="2.4" transform="rotate(50 2.6 -1)"/><ellipse cx="-2.4" cy="2.300" rx="1" ry="2" transform="rotate(-70 -2.4 2.3)"/><ellipse cx="2.4" cy="2.300" rx="1" ry="2" transform="rotate(70 2.4 2.3)"/><rect x="-0.250" y="-3" width="0.500" height="7.500"/></g><g transform="translate(771.0,283.0) rotate(190)" fill="#b4c487" opacity="0.62"><ellipse cx="0" cy="-3" rx="1.2" ry="2.6"/><ellipse cx="-2.6" cy="-1" rx="1.1" ry="2.4" transform="rotate(-50 -2.6 -1)"/><ellipse cx="2.6" cy="-1" rx="1.1" ry="2.4" transform="rotate(50 2.6 -1)"/><ellipse cx="-2.4" cy="2.300" rx="1" ry="2" transform="rotate(-70 -2.4 2.3)"/><ellipse cx="2.4" cy="2.300" rx="1" ry="2" transform="rotate(70 2.4 2.3)"/><rect x="-0.250" y="-3" width="0.500" height="7.500"/></g><g transform="translate(712.0,426.0) rotate(21)" fill="#86ab97" opacity="0.62"><ellipse cx="0" cy="-3" rx="1.2" ry="2.6"/><ellipse cx="-2.6" cy="-1" rx="1.1" ry="2.4" transform="rotate(-50 -2.6 -1)"/><ellipse cx="2.6" cy="-1" rx="1.1" ry="2.4" transform="rotate(50 2.6 -1)"/><ellipse cx="-2.4" cy="2.300" rx="1" ry="2" transform="rotate(-70 -2.4 2.3)"/><ellipse cx="2.4" cy="2.300" rx="1" ry="2" transform="rotate(70 2.4 2.3)"/><rect x="-0.250" y="-3" width="0.500" height="7.500"/></g><g transform="translate(667.0,281.0) rotate(68)" fill="#86ab97" opacity="0.62"><ellipse cx="0" cy="-3" rx="1.2" ry="2.6"/><ellipse cx="-2.6" cy="-1" rx="1.1" ry="2.4" transform="rotate(-50 -2.6 -1)"/><ellipse cx="2.6" cy="-1" rx="1.1" ry="2.4" transform="rotate(50 2.6 -1)"/><ellipse cx="-2.4" cy="2.300" rx="1" ry="2" transform="rotate(-70 -2.4 2.3)"/><ellipse cx="2.4" cy="2.300" rx="1" ry="2" transform="rotate(70 2.4 2.3)"/><rect x="-0.250" y="-3" width="0.500" height="7.500"/></g></g><rect x="681.800" y="291.200" width="80.500" height="128.800" fill="#f2cdbc" stroke="#8a91a8" stroke-width="0.6"/><rect x="661.5" y="271.5" width="3" height="3" fill="#fff" stroke="#7b93c9" stroke-width="0.5"/><rect x="720.5" y="271.5" width="3" height="3" fill="#fff" stroke="#7b93c9" stroke-width="0.5"/><rect x="661.5" y="350.5" width="3" height="3" fill="#fff" stroke="#7b93c9" stroke-width="0.5"/><rect x="661.5" y="429.5" width="3" height="3" fill="#fff" stroke="#7b93c9" stroke-width="0.5"/><rect x="720.5" y="429.5" width="3" height="3" fill="#fff" stroke="#7b93c9" stroke-width="0.5"/><rect x="680.5999999999999" y="290.0" width="2.400" height="2.400" fill="#5f7fbd"/><rect x="761.0999999999999" y="290.0" width="2.400" height="2.400" fill="#5f7fbd"/><rect x="680.5999999999999" y="418.8" width="2.400" height="2.400" fill="#5f7fbd"/></svg><div class="abs panel" style="left:770.5px;top:102px;width:131px;height:209.500px;background:#424242"><div class="abs" style="left:0;top:0;width:131px;height:6.500px;background:#292929"></div><div class="abs" style="left:0;top:6.500px;width:131px;height:11px;background:#2f2f2f"></div><div class="abs" style="left:1.200px;top:7px;width:20px;height:10.500px;background:#464646"></div><div class="abs" style="left:4.500px;top:22.500px;width:122px;height:8.500px;background:#a2a2a2"></div><div class="abs" style="left:121.500px;top:34px;width:5.500px;height:161.500px;background:#323232"></div><div class="abs" style="left:123px;top:189.500px;width:2.500px;height:2.500px;border-radius:2px;background:#a0a0a0"></div><div class="abs" style="left:123px;top:37px;width:2.500px;height:2px;background:#9a9a9a"></div><div class="abs" style="left:0;top:195.500px;width:131px;height:1px;background:#2c2c2c"></div><div class="abs" style="left:0;top:196.500px;width:131px;height:10.500px;background:#414141"></div><div class="abs" style="left:0;top:207px;width:131px;height:2.500px;background:#363636"></div></div><div class="abs panel" style="left:737px;top:140.700px;width:130.500px;height:75.500px;background:#444444"><div class="abs" style="left:0;top:0;width:130.500px;height:6.300px;background:#2a2a2a"></div><div class="abs" style="left:0;top:6.300px;width:130.500px;height:13.200px;background:#303030"></div><div class="abs" style="left:46.700px;top:6.800px;width:41.300px;height:12.700px;background:#474747"></div><div class="abs" style="left:87.200px;top:33.600px;width:40px;height:9.200px;background:#575757"></div></div><div class="abs panel" style="left:922.300px;top:80.500px;width:139.500px;height:137.800px;background:#434343"><div class="abs" style="left:0;top:0;width:139.500px;height:12.200px;background:#2c2c2c"></div><div class="abs" style="left:22px;top:0.500px;width:24.500px;height:11.700px;background:#464646"></div><div class="abs dd" style="left:53px;top:16.500px;width:83px;height:9px"></div><div class="abs dd" style="left:53px;top:46.500px;width:37px;height:9.500px"></div><div class="abs dd" style="left:53px;top:61px;width:37px;height:9.500px"></div><div class="abs dd" style="left:52.500px;top:105.500px;width:37.500px;height:10px"></div><div class="abs dd" style="left:52.500px;top:120.200px;width:37.500px;height:10px"></div><div class="abs" style="left:0;top:134.200px;width:139.500px;height:3.600px;background:#383838"></div></div><div id="ctx" class="abs"><div class="sep" style="top:28.500px"></div><div class="sep" style="top:44.500px"></div><div class="sep" style="top:73.500px"></div></div><div class="abs inp" style="left:98px;top:21.700px;width:29px"></div><div class="abs inp" style="left:417px;top:21.700px;width:31px"></div><div class="abs inp" style="left:473px;top:21.700px;width:31.500px"></div><div class="abs inp" style="left:535px;top:21.700px;width:31px"></div><div class="abs inp" style="left:613px;top:21.700px;width:31px"></div><div class="abs" style="left:1023px;top:0;width:57px;height:9.500px;background:#414141"></div><div class="abs" style="left:970px;top:3.500px;width:49px;height:8.500px;background:#9c9c9c"></div><div class="abs inp" style="left:59px;top:578px;width:29px;height:8px;line-height:8px"></div><div class="abs inp" style="left:121px;top:578px;width:24px;height:8px;line-height:8px"></div><div class="abs" style="left:697.500px;top:577.500px;width:8.500px;height:9px;background:#a0a0a0"></div><svg width="1080" height="587" viewBox="0 0 1080 587" style="pointer-events:none"><defs><linearGradient id="gtool" x1="0" y1="0" x2="1" y2="0"><stop offset="0" stop-color="#f0f0f0"/><stop offset="1" stop-color="#333"/></linearGradient></defs><rect x="3.500" y="52.500" width="15" height="12" fill="#2b2b2b"/><rect x="0" y="35.500" width="22.500" height="7.200" fill="#2b2b2b"/><path d="M3,38 l1.800,1.200 -1.800,1.200Z M5.300,38 l1.800,1.200 -1.800,1.200Z" fill="#d0d0d0"/><path d="M5,45.400 h12.500" stroke="#2a2a2a" stroke-width="1.200" stroke-dasharray="1 0.700"/><g opacity="0.82"><g transform="translate(11.3,58) scale(0.9) translate(-11.3,-58)"><path d="M8.500,53 v9.500 l2.300,-2.200 1.800,3.500 1.400,-0.700 -1.700,-3.400 3,-0.200Z" fill="#3a3a3a" stroke="#dcdcdc" stroke-width="0.9"/></g><g transform="translate(11.3,72) scale(0.85) translate(-11.3,-72)"><path d="M8.500,67 v9.500 l2.300,-2.200 1.800,3.500 1.400,-0.700 -1.700,-3.400 3,-0.200Z" fill="#d8d8d8"/></g><path d="M17.500,78 l2,0 0,-2Z" fill="#bdbdbd"/><g transform="translate(11.3,85.5) scale(0.85) translate(-11.3,-85.5)"><path d="M9.500,83.5 l6.500,7" stroke="#d8d8d8" stroke-width="1.500" fill="none"/><path d="M8.500,79.0 l1,2.800 2.800,-0.800 -1.800,2.300 1.800,2.300 -2.800,-0.800 -1,2.800 -1,-2.800 -2.800,0.800 1.800,-2.300 -1.800,-2.300 2.800,0.800Z" fill="#d8d8d8"/></g><g transform="translate(11.3,98.5) scale(0.85) translate(-11.3,-98.5)"><ellipse cx="11" cy="97.5" rx="4.500" ry="3" fill="none" stroke="#d8d8d8" stroke-width="1.100"/><path d="M8,99.5 q-1,3 1.500,4.500" stroke="#d8d8d8" fill="none" stroke-width="1"/></g><g transform="translate(11.3,113.5) scale(0.85) translate(-11.3,-113.5)"><path d="M6.500,119.0 l1,-5 4.500,-4 3.500,3.500 -4,4.500Z M12.800,109.2 l1.700,-1.700 3.500,3.500 -1.700,1.700Z" fill="#d8d8d8"/><circle cx="10.800" cy="114.500" r="1" fill="#3e3e3e"/><path d="M6.500,119.0 l3.600,-3.800" stroke="#3e3e3e" stroke-width="0.600"/></g><path d="M17.500,119.5 l2,0 0,-2Z" fill="#bdbdbd"/><g transform="translate(11.3,127) scale(0.85) translate(-11.3,-127)"><path d="M8,132 l1,-4.500 4.200,-3.800 3.300,3.300 -3.800,4.200Z M14,122.7 l1.600,-1.600 3.300,3.300 -1.600,1.600Z" fill="#d8d8d8"/><circle cx="12" cy="127.8" r="0.900" fill="#3e3e3e"/><path d="M5,132 q-1,-5 2.500,-6.500 q1.500,0 0.500,2.500" stroke="#d8d8d8" fill="none" stroke-width="1"/></g><path d="M17.500,133 l2,0 0,-2Z" fill="#bdbdbd"/><g transform="translate(11.3,141) scale(0.85) translate(-11.3,-141)"><path d="M7,136 h8.500 v2.200 h-0.800 l-0.500,-1.200 h-2.200 v8 l1.200,0.500 v0.700 h-4 v-0.700 l1.200,-0.500 v-8 h-2.200 l-0.500,1.200 h-0.700Z" fill="#d8d8d8"/></g><path d="M17.500,147 l2,0 0,-2Z" fill="#bdbdbd"/><g transform="translate(11.3,154.5) scale(0.85) translate(-11.3,-154.5)"><path d="M7,159.0 l8.500,-9.500" stroke="#d8d8d8" stroke-width="1.100"/></g><path d="M17.500,160.5 l2,0 0,-2Z" fill="#bdbdbd"/><g transform="translate(11.3,168.5) scale(0.85) translate(-11.3,-168.5)"><rect x="7" y="164.5" width="8.500" height="7.500" fill="#8a8a8a" stroke="#d8d8d8" stroke-width="1"/></g><path d="M17.500,174.5 l2,0 0,-2Z" fill="#bdbdbd"/><g transform="translate(11.3,181) scale(0.85) translate(-11.3,-181)"><path d="M15.500,175.5 l-6,6.500 M9.500,182 q-2.500,0.500 -3,4 q3,0 4.200,-2.500Z" stroke="#d8d8d8" stroke-width="1.200" fill="#d8d8d8"/></g><path d="M17.500,187 l2,0 0,-2Z" fill="#bdbdbd"/><g transform="translate(11.3,195) scale(0.85) translate(-11.3,-195)"><path d="M14,189.5 l2,2 -6.500,7 -3,1 1,-3Z" fill="#d8d8d8"/></g><path d="M17.500,201 l2,0 0,-2Z" fill="#bdbdbd"/><g transform="translate(11.3,208) scale(0.85) translate(-11.3,-208)"><path d="M10.500,204.5 l5,-1 1,3 -6.500,5 -4,-2.500Z" fill="#d8d8d8"/></g><path d="M17.500,214 l2,0 0,-2Z" fill="#bdbdbd"/><g transform="translate(11.3,223.5) scale(0.85) translate(-11.3,-223.5)"><path d="M14.500,222.5 a4,4 0 1 1 -3.500,-3.500" stroke="#d8d8d8" stroke-width="1.100" fill="none"/><path d="M10,217.0 l3,2 -3,2Z" fill="#d8d8d8"/></g><path d="M17.500,229.5 l2,0 0,-2Z" fill="#bdbdbd"/><g transform="translate(11.3,237.5) scale(0.85) translate(-11.3,-237.5)"><rect x="6.500" y="236.5" width="5" height="5" fill="none" stroke="#d8d8d8" stroke-width="0.900"/><rect x="8.500" y="232.5" width="7.500" height="7.500" fill="none" stroke="#d8d8d8" stroke-width="0.900"/><path d="M15,233.5 l-3,3" stroke="#d8d8d8" stroke-width="0.800"/></g><path d="M17.500,243.5 l2,0 0,-2Z" fill="#bdbdbd"/><g transform="translate(11.3,251) scale(0.85) translate(-11.3,-251)"><path d="M6.500,255 q1,-6 4,-5 q2,1 4.500,-3 M7,248 l3,2 M13,253 l3,2 M9,246 l1.500,3" stroke="#d8d8d8" stroke-width="1.200" fill="none"/></g><path d="M17.500,257 l2,0 0,-2Z" fill="#bdbdbd"/><g transform="translate(11.3,264.5) scale(0.85) translate(-11.3,-264.5)"><rect x="7" y="260.5" width="8" height="7.500" fill="none" stroke="#d8d8d8" stroke-width="0.900" stroke-dasharray="1.500 1"/><path d="M8,261.5 l4.500,3.500 -2,0.300 0.800,2Z" fill="#d8d8d8"/></g><g transform="translate(11.3,278) scale(0.85) translate(-11.3,-278)"><circle cx="9.500" cy="276.500" r="3.200" fill="#8a8a8a" stroke="#d8d8d8" stroke-width="0.800"/><rect x="9.500" y="277" width="5" height="4.500" fill="#aaa" stroke="#d8d8d8" stroke-width="0.800"/><path d="M13,279 l3.500,3 -2,0 0,1.500Z" fill="#e5e5e5"/></g><path d="M17.500,284 l2,0 0,-2Z" fill="#bdbdbd"/><g transform="translate(11.3,291.5) scale(0.85) translate(-11.3,-291.5)"><path d="M7,296.0 v-9 M7,296.0 h9 M7,296.0 l8,-6 M9.500,296.0 v-7.500 M12,296.0 v-5.500 M14.500,296.0 v-3.500 M7,293.0 h8" stroke="#d8d8d8" stroke-width="0.800" fill="none"/></g><path d="M17.500,297.5 l2,0 0,-2Z" fill="#bdbdbd"/><g transform="translate(11.3,305.5) scale(0.85) translate(-11.3,-305.5)"><rect x="7" y="301.5" width="8.500" height="8" fill="none" stroke="#d8d8d8" stroke-width="0.900"/><path d="M7,305.5 q4,-2 8.500,0 M11.200,301.5 q-1.500,4 0,8" stroke="#d8d8d8" stroke-width="0.800" fill="none"/><circle cx="11.200" cy="305.500" r="1.200" fill="#d8d8d8"/></g><g transform="translate(11.3,319) scale(0.85) translate(-11.3,-319)"><rect x="6.500" y="315.5" width="9.500" height="7" fill="url(#gtool)" stroke="#d8d8d8" stroke-width="0.800"/></g><g transform="translate(11.3,332.5) scale(0.85) translate(-11.3,-332.5)"><path d="M15,327.0 l1.500,1.500 -2,2.500 0.500,0.500 -1,1 -0.500,-0.500 -5,5 -2,0.500 0.500,-2 5,-5 -0.500,-0.500 1,-1 0.500,0.500Z" fill="#d8d8d8"/></g><path d="M17.500,338.5 l2,0 0,-2Z" fill="#bdbdbd"/><g transform="translate(11.3,346.5) scale(0.85) translate(-11.3,-346.5)"><rect x="6.500" y="342.0" width="5" height="5" fill="#d8d8d8"/><circle cx="13.500" cy="348.0" r="3" fill="none" stroke="#d8d8d8" stroke-width="1"/><path d="M9,344.5 l4.500,3.500" stroke="#999" stroke-width="0.800"/></g><g transform="translate(11.3,360.5) scale(0.85) translate(-11.3,-360.5)"><rect x="8" y="358.0" width="6.500" height="7" rx="1" fill="none" stroke="#d8d8d8" stroke-width="1"/><circle cx="11.200" cy="361.500" r="1.600" fill="#d8d8d8"/><path d="M9.500,358.0 v-2 h3.500 v2 M7,355.5 h1 M15,355.0 h1" stroke="#d8d8d8" stroke-width="0.900" fill="none"/></g><path d="M17.500,366.5 l2,0 0,-2Z" fill="#bdbdbd"/><g transform="translate(11.3,375) scale(0.85) translate(-11.3,-375)"><path d="M6.500,370 v9.500 h9.500" stroke="#d8d8d8" stroke-width="0.900" fill="none"/><rect x="8" y="374" width="2" height="5" fill="#d8d8d8"/><rect x="10.500" y="371" width="2" height="8" fill="#d8d8d8"/><rect x="13" y="373" width="2" height="6" fill="#d8d8d8"/></g><path d="M17.500,381 l2,0 0,-2Z" fill="#bdbdbd"/><g transform="translate(11.3,389) scale(0.85) translate(-11.3,-389)"><rect x="7.500" y="385.5" width="7.500" height="7" fill="#777" stroke="#d8d8d8" stroke-width="0.900"/><path d="M5.500,385.5 h11.500 M5.500,392.5 h11.500 M7.500,383.5 v11 M15,383.5 v11" stroke="#d8d8d8" stroke-width="0.600"/></g><g transform="translate(11.3,403.5) scale(0.85) translate(-11.3,-403.5)"><path d="M15.500,398.5 l1,1 -7,7.500 -3,1.500 1.500,-3Z" fill="#d8d8d8"/></g><path d="M17.500,409.5 l2,0 0,-2Z" fill="#bdbdbd"/><g transform="translate(11.3,416.5) scale(0.85) translate(-11.3,-416.5)"><path d="M8,421.5 q-2.500,-3 -2,-5 l1.500,0.500 v-4 h1.200 v-1.200 h1.300 v-0.600 h1.300 v0.800 h1.300 v1 h1.200 l0,5 q0,2 -1.300,3.500Z" fill="#d8d8d8"/></g><path d="M17.500,422.5 l2,0 0,-2Z" fill="#bdbdbd"/><g transform="translate(11.3,430) scale(0.85) translate(-11.3,-430)"><circle cx="10" cy="428.500" r="3.300" fill="#6a6a6a" stroke="#d8d8d8" stroke-width="1.200"/><path d="M12.500,431 l3.500,4" stroke="#d8d8d8" stroke-width="1.600"/></g></g><rect x="3.500" y="440.500" width="4" height="4" fill="#fff"/><rect x="5.500" y="442.500" width="4" height="4" fill="#222" stroke="#ddd" stroke-width="0.500"/><path d="M14,441.500 q3,0 3,3 M13,441.500 l1.500,-1 v2Z M17,445.500 l-1,-1.500 h2Z" stroke="#888" stroke-width="0.600" fill="#888"/><text x="7" y="455" font-size="6" fill="#ddd" font-family="Liberation Sans">?</text><rect x="8.500" y="455" width="10.500" height="10.500" fill="#fff" stroke="#8c1d2a" stroke-width="0.800"/><path d="M18.500,455.500 l-9.500,9.500" stroke="#c4222e" stroke-width="1.400"/><rect x="12.500" y="455.500" width="6" height="6" fill="#3c3c3c"/><path d="M18.500,455.500 l-9.500,9.500" stroke="#c4222e" stroke-width="1.200" opacity="0"/><rect x="4" y="469.500" width="4.500" height="5.500" fill="#d7b5b5"/><rect x="9" y="469.500" width="4.500" height="5.500" fill="#c9a5a5"/><rect x="14" y="469.500" width="4.500" height="5.500" fill="#eee" stroke="#a22" stroke-width="0.500"/><path d="M18.500,469.500 l-4.500,5.500" stroke="#c22" stroke-width="0.900"/><rect x="8" y="480" width="4" height="4" fill="none" stroke="#ccc" stroke-width="0.800"/><rect x="10" y="482" width="4" height="4" fill="#777" stroke="#ccc" stroke-width="0.800"/><rect x="9" y="492" width="7" height="6" fill="#444" stroke="#ccc" stroke-width="0.800"/><rect x="6.500" y="494.500" width="7" height="6" fill="#444" stroke="#ccc" stroke-width="0.800"/><rect x="329.500" y="3.500" width="10" height="9.500" fill="#3d3d3d" stroke="#555" stroke-width="0.800"/><path d="M333,6 v5 M335.500,8 v3" stroke="#6b5a3a" stroke-width="0.800"/><rect x="349.500" y="3.500" width="10" height="9.500" fill="#2a2a2a" stroke="#cfcfcf" stroke-width="0.900"/><text x="351.300" y="10.800" font-size="5.500" fill="#ddd" font-family="Liberation Sans" font-weight="bold">St</text><rect x="371.500" y="4" width="9.500" height="9" fill="#555" stroke="#cfcfcf" stroke-width="0.900"/><path d="M372,7 h9 M376,7 v6 M372,10 h4" stroke="#cfcfcf" stroke-width="0.700"/><path d="M383,7.500 h4 l-2,2.500Z" fill="#cfcfcf"/><path d="M405.500,3.500 q-5,0.500 -7.500,5 l-2,0.500 1.500,1.500 -1,2 2,-1 1.500,1.500 0.500,-2 q4.500,-2.500 5,-7.500Z" fill="#cfcfcf"/><path d="M396,12 l-1,2.500 2.500,-1Z" fill="#cfcfcf"/><path d="M952.500,7.500 h3.500 l-1.700,2.200Z" fill="#bbb"/><circle cx="974.500" cy="7" r="2" fill="none" stroke="#444" stroke-width="0.800"/><path d="M973,8.500 l-1.700,1.700" stroke="#444" stroke-width="0.800"/><rect x="1029.800" y="6" width="5.200" height="1.600" fill="#e8e8e8"/><rect x="1045.300" y="4" width="4.200" height="3.600" fill="none" stroke="#e8e8e8" stroke-width="1"/><path d="M1047,4 v-1.600 h4.400 v3.800 h-1.800" fill="none" stroke="#e8e8e8" stroke-width="1"/><path d="M1066.800,2.500 l4.400,4.400 M1071.200,2.500 l-4.400,4.400" stroke="#e8e8e8" stroke-width="1.300"/><g transform="translate(0,-0.7)"><rect x="128.500" y="22" width="7.500" height="9" fill="#4f4f4f" stroke="#2f2f2f" stroke-width="0.500"/><path d="M131,24.500 l3,2 -3,2Z" fill="#e0e0e0"/><path d="M62,31 h31" stroke="#d98a34" stroke-width="0.500" stroke-dasharray="1 1"/><circle cx="150.800" cy="26.500" r="4.200" fill="#8e8e8e" stroke="#cfcfcf" stroke-width="0.800"/><path d="M148,25 q3,-2 5,1 q-1,3 -3.500,2.500Z" fill="#d5d5d5"/><rect x="169.500" y="23" width="7" height="7" fill="none" stroke="#cfcfcf" stroke-width="0.900" stroke-dasharray="1.200 1"/><path d="M179,25.500 h3.500 l-1.700,2.200Z" fill="#cfcfcf"/><g transform="translate(195.8,26.5) scale(0.85) translate(-195,-26.5)" opacity="0.9"><path d="M191,22.0 v9" stroke="#cfcfcf" stroke-width="0.900"/><rect x="192" y="23.0" width="5" height="2.800" fill="#cfcfcf"/><rect x="192" y="27.2" width="7" height="2.800" fill="none" stroke="#cfcfcf" stroke-width="0.800"/></g><g transform="translate(210.8,26.5) scale(0.85) translate(-210,-26.5)" opacity="0.9"><path d="M210,22.0 v9" stroke="#cfcfcf" stroke-width="0.900"/><rect x="207.5" y="23.0" width="5" height="2.800" fill="#cfcfcf"/><rect x="206.5" y="27.2" width="7" height="2.800" fill="#555" stroke="#cfcfcf" stroke-width="0.800"/></g><g transform="translate(226.8,26.5) scale(0.85) translate(-226,-26.5)" opacity="0.9"><path d="M230,22.0 v9" stroke="#cfcfcf" stroke-width="0.900"/><rect x="224" y="23.0" width="5" height="2.800" fill="#cfcfcf"/><rect x="222" y="27.2" width="7" height="2.800" fill="none" stroke="#cfcfcf" stroke-width="0.800"/></g><g transform="translate(242.8,26.5) scale(0.85) translate(-242,-26.5)" opacity="0.9"><path d="M237.5,22.5 h9" stroke="#cfcfcf" stroke-width="0.900"/><rect x="238.5" y="23.5" width="2.800" height="5" fill="#cfcfcf"/><rect x="242.7" y="23.5" width="2.800" height="7" fill="none" stroke="#cfcfcf" stroke-width="0.800"/></g><g transform="translate(257.8,26.5) scale(0.85) translate(-257,-26.5)" opacity="0.9"><path d="M252.5,26.5 h9" stroke="#cfcfcf" stroke-width="0.900"/><rect x="253.5" y="24.0" width="2.800" height="5" fill="#cfcfcf"/><rect x="257.7" y="23.0" width="2.800" height="7" fill="#555" stroke="#cfcfcf" stroke-width="0.800"/></g><g transform="translate(272.8,26.5) scale(0.85) translate(-272,-26.5)" opacity="0.9"><path d="M267.5,30.5 h9" stroke="#cfcfcf" stroke-width="0.900"/><rect x="268.5" y="25.0" width="2.800" height="5" fill="#cfcfcf"/><rect x="272.7" y="23.0" width="2.800" height="7" fill="none" stroke="#cfcfcf" stroke-width="0.800"/></g><g transform="translate(288.8,26.5) scale(0.85) translate(-288,-26.5)" opacity="0.9"><path d="M283.5,23.0 h9 M283.5,27.5 h9" stroke="#cfcfcf" stroke-width="0.800"/><rect x="285.5" y="23.5" width="5" height="2.500" fill="#cfcfcf"/><rect x="284.5" y="28.0" width="7" height="2.500" fill="none" stroke="#cfcfcf" stroke-width="0.700"/></g><g transform="translate(303.8,26.5) scale(0.85) translate(-303,-26.5)" opacity="0.9"><path d="M298.5,23.0 h9 M298.5,27.5 h9" stroke="#cfcfcf" stroke-width="0.800"/><rect x="300.5" y="23.5" width="5" height="2.500" fill="#cfcfcf"/><rect x="299.5" y="28.0" width="7" height="2.500" fill="none" stroke="#cfcfcf" stroke-width="0.700"/></g><g transform="translate(318.8,26.5) scale(0.85) translate(-318,-26.5)" opacity="0.9"><path d="M313.5,23.0 h9 M313.5,27.5 h9" stroke="#cfcfcf" stroke-width="0.800"/><rect x="315.5" y="23.5" width="5" height="2.500" fill="#cfcfcf"/><rect x="314.5" y="28.0" width="7" height="2.500" fill="none" stroke="#cfcfcf" stroke-width="0.700"/></g><g transform="translate(336.8,26.5) scale(0.85) translate(-336,-26.5)" opacity="0.9"><path d="M332.5,22.0 v9 M337,22.0 v9" stroke="#cfcfcf" stroke-width="0.800"/><rect x="333" y="24.0" width="2.500" height="5" fill="#cfcfcf"/><rect x="337.5" y="23.0" width="2.500" height="7" fill="none" stroke="#cfcfcf" stroke-width="0.700"/></g><g transform="translate(350.8,26.5) scale(0.85) translate(-350,-26.5)" opacity="0.9"><path d="M346.5,22.0 v9 M351,22.0 v9" stroke="#cfcfcf" stroke-width="0.800"/><rect x="347" y="24.0" width="2.500" height="5" fill="#cfcfcf"/><rect x="351.5" y="23.0" width="2.500" height="7" fill="none" stroke="#cfcfcf" stroke-width="0.700"/></g><g transform="translate(365.8,26.5) scale(0.85) translate(-365,-26.5)" opacity="0.9"><path d="M361.5,22.0 v9 M366,22.0 v9" stroke="#cfcfcf" stroke-width="0.800"/><rect x="362" y="24.0" width="2.500" height="5" fill="#cfcfcf"/><rect x="366.5" y="23.0" width="2.500" height="7" fill="none" stroke="#cfcfcf" stroke-width="0.700"/></g><rect x="380.5" y="21.5" width="2.500" height="2.500" fill="none" stroke="#d0d0d0" stroke-width="0.600"/><rect x="380.5" y="25.5" width="2.500" height="2.500" fill="none" stroke="#d0d0d0" stroke-width="0.600"/><rect x="380.5" y="29.5" width="2.500" height="2.500" fill="none" stroke="#d0d0d0" stroke-width="0.600"/><rect x="384.5" y="21.5" width="2.500" height="2.500" fill="none" stroke="#d0d0d0" stroke-width="0.600"/><rect x="384.5" y="25.5" width="2.500" height="2.500" fill="#fff" stroke="#d0d0d0" stroke-width="0.600"/><rect x="384.5" y="29.5" width="2.500" height="2.500" fill="none" stroke="#d0d0d0" stroke-width="0.600"/><rect x="388.5" y="21.5" width="2.500" height="2.500" fill="none" stroke="#d0d0d0" stroke-width="0.600"/><rect x="388.5" y="25.5" width="2.500" height="2.500" fill="none" stroke="#d0d0d0" stroke-width="0.600"/><rect x="388.5" y="29.5" width="2.500" height="2.500" fill="none" stroke="#d0d0d0" stroke-width="0.600"/><rect x="408.5" y="22" width="6" height="9" fill="#4a4a4a"/><path d="M409.5,25.5 h4 l-2,-2.500Z M409.5,27.5 h4 l-2,2.500Z" fill="#e0e0e0"/><rect x="465" y="22" width="6" height="9" fill="#4a4a4a"/><path d="M466,25.5 h4 l-2,-2.500Z M466,27.5 h4 l-2,2.500Z" fill="#e0e0e0"/><rect x="527" y="22" width="6" height="9" fill="#4a4a4a"/><path d="M528,25.5 h4 l-2,-2.500Z M528,27.5 h4 l-2,2.500Z" fill="#e0e0e0"/><rect x="605" y="22" width="6" height="9" fill="#4a4a4a"/><path d="M606,25.5 h4 l-2,-2.500Z M606,27.5 h4 l-2,2.500Z" fill="#e0e0e0"/><text x="397" y="29.500" font-size="6.800" fill="#96743a" font-family="Liberation Sans">X:</text><text x="453" y="29.500" font-size="6.800" fill="#96743a" font-family="Liberation Sans">Y:</text><path d="M397,31 h6 M453,31 h6" stroke="#96743a" stroke-width="0.400" stroke-dasharray="1 1"/><path d="M508.500,30.500 l1.500,-6 2,-1.500 2.500,0 2,1.500 1.500,6Z" fill="#8a5c34"/><path d="M509.500,28 h7" stroke="#b87a40" stroke-width="1"/><path d="M587.200,30.500 l1.500,-6 2,-1.500 2.500,0 2,1.500 1.500,6Z" fill="#96603a"/><path d="M588.200,28 h7" stroke="#c07e44" stroke-width="1"/><path d="M573,25 h-1.500 a1.500,1.500 0 0 0 0,3 h1.500 M577,25 h1.500 a1.500,1.500 0 0 1 0,3 h-1.500 M573.500,26.500 h3" stroke="#cfcfcf" stroke-width="0.800" fill="none"/><path d="M1066.500,25 l2,1.500 -2,1.500Z" fill="#ccc"/><path d="M1070,24.500 h5 M1070,26.500 h5 M1070,28.500 h5" stroke="#ccc" stroke-width="0.700"/></g><path d="M158.500,40.800 l3,3 M161.500,40.800 l-3,3" stroke="#c8c8c8" stroke-width="0.800"/><path d="M1054.500,54 h5 l-2.500,-3.500Z" fill="#ddd"/><rect x="1063" y="35" width="17" height="8" fill="#2b2b2b"/><path d="M1076.500,37.500 l-1.500,1.200 1.500,1.200 M1079,37.500 l-1.500,1.200 1.500,1.200" stroke="#bbb" stroke-width="0.600" fill="none"/><path d="M1068,45.300 h10" stroke="#2a2a2a" stroke-width="1" stroke-dasharray="1 1"/><g transform="translate(1074.3,56.300) scale(1,0.8) translate(-1073.5,-57)"><path d="M1067.5,57 q0,-5 6,-5 q5,0 5.500,4 q0,3 -3,2.500 q-2,0 -1.500,2 q0,1.500 -2,1.500 q-5,0 -5,-5Z" fill="#d8d8d8"/><circle cx="1070.500" cy="55" r="0.900" fill="#444"/><circle cx="1073.500" cy="54" r="0.900" fill="#444"/><circle cx="1076.500" cy="55.500" r="0.900" fill="#444"/></g><path d="M1068.0,66 v11 h11 q-1,-9 -11,-11Z" fill="#d8d8d8"/><path d="M1068.0,70 q5,1 7,7" stroke="#555" stroke-width="0.800" fill="none"/><path d="M1066,84.500 h14" stroke="#2a2a2a" stroke-width="1.500"/><path d="M1068.0,91 h11 M1068.0,95 h11 M1068.0,98.500 h11" stroke="#d8d8d8" stroke-width="1.300"/><rect x="1064.500" y="103" width="15.500" height="14" fill="#262626"/><rect x="1068.0" y="106" width="11" height="8" fill="url(#gtool)" stroke="#d8d8d8" stroke-width="0.900"/><circle cx="1072.0" cy="125.500" r="4" fill="#bbb" stroke="#e0e0e0" stroke-width="0.800"/><circle cx="1075.0" cy="128" r="4" fill="#777" fill-opacity="0.700" stroke="#e0e0e0" stroke-width="0.800"/><path d="M1066,139 h14" stroke="#2a2a2a" stroke-width="1.500"/><path d="M1069.5,154 a3,3 0 0 1 0,-6 a4,4 0 0 1 7,-1 a3.500,3.500 0 0 1 1,7Z" fill="none" stroke="#d8d8d8" stroke-width="1.200"/><circle cx="1073.500" cy="150.500" r="1.500" fill="none" stroke="#d8d8d8" stroke-width="0.800"/><circle cx="1073.500" cy="165.500" r="3.500" fill="#d8d8d8"/><circle cx="1073.500" cy="165.500" r="5.500" fill="none" stroke="#d8d8d8" stroke-width="1" stroke-dasharray="1 1"/><rect x="1071.0" y="176" width="7.500" height="7.500" fill="none" stroke="#d8d8d8" stroke-width="0.900"/><circle cx="1071.0" cy="184" r="3" fill="#555" stroke="#d8d8d8" stroke-width="0.900"/><path d="M1066,194 h14" stroke="#2a2a2a" stroke-width="1.500"/><path d="M1073.5,199.500 l6,3 -6,3 -6,-3Z" fill="#e0e0e0"/><path d="M1067.5,205.500 l6,3 6,-3" stroke="#e0e0e0" stroke-width="1.200" fill="none"/><rect x="1068.0" y="214.500" width="7" height="7" fill="none" stroke="#d8d8d8" stroke-width="0.900"/><rect x="1072.0" y="218.500" width="7" height="7" fill="#444" stroke="#d8d8d8" stroke-width="0.900"/><path d="M885.500,104 l-1.500,1.200 1.500,1.200 M888,104 l-1.500,1.200 1.500,1.200" stroke="#ccc" stroke-width="0.600" fill="none"/><path d="M895,103.800 l2.500,2.500 M897.500,103.800 l-2.500,2.500" stroke="#ccc" stroke-width="0.700"/><path d="M893,113 l1.500,1.200 -1.500,1.200Z" fill="#ccc"/><path d="M895.500,112.500 h3.500 M895.500,114.200 h3.500 M895.500,115.800 h3.500" stroke="#ccc" stroke-width="0.600"/><circle cx="779" cy="128.300" r="2" fill="none" stroke="#333" stroke-width="0.800"/><path d="M777.500,129.800 l-1.500,1.500" stroke="#333" stroke-width="0.800"/><path d="M775.500,138 h2 l0.700,0.700 h2 v2.300 h-4.700Z" fill="#d8d8d8"/><rect x="782.5" y="137.800" width="7.400" height="3.200" fill="#f8f1e2"/><rect x="790.3" y="137.800" width="7.400" height="3.200" fill="#f4e6cf"/><rect x="798.1" y="137.800" width="7.400" height="3.200" fill="#f3e0c4"/><rect x="805.9" y="137.800" width="7.400" height="3.200" fill="#efd6b4"/><rect x="813.7" y="137.800" width="7.400" height="3.200" fill="#ebcca3"/><path d="M776.500,300 v6 M778.500,300 v6 M780,300.500 l2,5.500" stroke="#ccc" stroke-width="0.900"/><circle cx="784.300" cy="305.600" r="0.600" fill="#ccc"/><path d="M798,300 v6 l-3.500,-3Z" fill="#ccc"/><path d="M808.500,300 v6 l3.500,-3Z" fill="#ccc"/><path d="M873.500,300 l6.500,6 M880,300 l-6.500,6 M878.500,299.500 l2.500,0" stroke="#ccc" stroke-width="1"/><path d="M830,310.800 h10" stroke="#1c1c1c" stroke-width="1.500"/><path d="M853,142.700 l-1.500,1.200 1.500,1.200 M855.500,142.700 l-1.500,1.200 1.500,1.200" stroke="#ccc" stroke-width="0.600" fill="none"/><path d="M862,142.500 l2.500,2.500 M864.500,142.500 l-2.500,2.500" stroke="#ccc" stroke-width="0.700"/><path d="M859,152 l1.500,1.200 -1.500,1.200Z" fill="#ccc"/><path d="M861.500,151.500 h3.500 M861.500,153.200 h3.500 M861.500,154.800 h3.500" stroke="#ccc" stroke-width="0.600"/><g transform="translate(747.5,178.7) scale(0.85) translate(-747.5,-178.7)" opacity="0.9"><rect x="743.5" y="174.7" width="5.500" height="5.500" fill="#aaa" stroke="#c8c8c8" stroke-width="0.700"/><rect x="746.0" y="177.2" width="5.500" height="5.500" fill="#aaa" stroke="#c8c8c8" stroke-width="0.700"/></g><g transform="translate(768.3,178.7) scale(0.85) translate(-768.3,-178.7)" opacity="0.9"><path d="M764.3,174.7 h5.500 v2.500 h-3 v3 h-2.500Z" fill="#bbb" stroke="#c8c8c8" stroke-width="0.600"/><rect x="766.8" y="177.2" width="5.500" height="5.500" fill="none" stroke="#777" stroke-width="0.500"/></g><g transform="translate(788,178.7) scale(0.85) translate(-788,-178.7)" opacity="0.9"><rect x="784" y="174.7" width="5.500" height="5.500" fill="none" stroke="#c8c8c8" stroke-width="0.700"/><rect x="786.5" y="177.2" width="5.500" height="5.500" fill="none" stroke="#c8c8c8" stroke-width="0.700"/><rect x="786.5" y="177.2" width="3" height="3" fill="#ccc"/></g><g transform="translate(808.7,178.7) scale(0.85) translate(-808.7,-178.7)" opacity="0.9"><rect x="804.7" y="174.7" width="5.500" height="5.500" fill="#aaa" stroke="#c8c8c8" stroke-width="0.700"/><rect x="807.2" y="177.2" width="5.500" height="5.500" fill="#aaa" stroke="#c8c8c8" stroke-width="0.700"/><rect x="807.2" y="177.2" width="3" height="3" fill="#434343"/></g><g transform="translate(749.7,205.7) scale(0.85) translate(-749.7,-205.7)" opacity="0.9"><rect x="745.2" y="201.7" width="4.500" height="4.500" fill="#888" stroke="#c8c8c8" stroke-width="0.700"/><rect x="748.7" y="204.7" width="5.500" height="5.500" fill="#bbb" stroke="#c8c8c8" stroke-width="0.700"/></g><g transform="translate(770,205.7) scale(0.85) translate(-770,-205.7)" opacity="0.9"><rect x="766" y="201.7" width="5.500" height="5.500" fill="#999" stroke="#c8c8c8" stroke-width="0.700"/><rect x="768.5" y="204.2" width="5.500" height="5.500" fill="#ddd" stroke="#c8c8c8" stroke-width="0.700"/></g><g transform="translate(790.8,205.7) scale(0.85) translate(-790.8,-205.7)" opacity="0.9"><rect x="787.3" y="202.2" width="5" height="5" fill="#888"/><rect x="789.3" y="204.2" width="5.500" height="5.500" fill="#ddd"/></g><g transform="translate(812,205.7) scale(0.85) translate(-812,-205.7)" opacity="0.9"><rect x="810" y="203.7" width="4.500" height="4.500" fill="#ccc"/></g><g transform="translate(833.3,205.7) scale(0.85) translate(-833.3,-205.7)" opacity="0.9"><rect x="829.3" y="201.7" width="5.500" height="5.500" fill="none" stroke="#c8c8c8" stroke-width="0.700"/><rect x="831.8" y="204.2" width="5.500" height="5.500" fill="none" stroke="#c8c8c8" stroke-width="0.700"/></g><g transform="translate(855.3,205.7) scale(0.85) translate(-855.3,-205.7)" opacity="0.9"><rect x="851.3" y="201.7" width="8" height="8" fill="none" stroke="#c8c8c8" stroke-width="0.700"/><rect x="854.3" y="204.7" width="4" height="4" fill="#bbb"/></g><path d="M947,86.800 l1.500,-2 1.500,2Z M947,88.200 l1.500,2 1.500,-2Z" fill="#e0e0e0"/><path d="M1038.500,85.300 l2.800,2.200 -2.800,2.200Z M1041.800,85.300 l2.800,2.200 -2.800,2.200Z" fill="#e8e8e8"/><path d="M1050.500,86 l1.500,1.200 -1.500,1.200Z" fill="#ccc"/><path d="M1053,85.500 h4 M1053,87.200 h4 M1053,88.800 h4" stroke="#ccc" stroke-width="0.600"/><rect x="926" y="97" width="15.500" height="16" fill="url(#gsw)" stroke="#2a2a2a" stroke-width="0.600"/><path d="M944.500,104 h3 l-1.500,2Z" fill="#ddd"/><path d="M1051.500,100.500 h4 l-2,2.500Z" fill="#e8e8e8"/><rect x="975.6" y="112" width="10" height="9.800" fill="#505050" stroke="#666" stroke-width="0.600"/><path d="M978.1,113.500 v7 M982.1,113.500 v7" stroke="#777" stroke-width="1"/><rect x="989.6" y="112" width="10" height="9.800" fill="#505050" stroke="#666" stroke-width="0.600"/><path d="M992.1,113.500 v7 M996.1,113.500 v7" stroke="#777" stroke-width="1"/><rect x="1003" y="112" width="10" height="9.800" fill="#505050" stroke="#666" stroke-width="0.600"/><path d="M1005.5,113.500 v7 M1009.5,113.500 v7" stroke="#777" stroke-width="1"/><text x="929.800" y="125" font-size="6.500" fill="#e4e4e4" font-family="Liberation Sans">?</text><rect x="932" y="123.400" width="10.300" height="9.400" fill="#fdfdfd" stroke="#9c2a3a" stroke-width="0.600"/><path d="M942,123.700 l-9.700,8.800" stroke="#c2283a" stroke-width="1.500"/><rect x="935.300" y="126.200" width="3.800" height="3.800" fill="#8a2030"/><path d="M930,141 h9 M930,144 h9 M930,147 h9 M932.500,139.500 v9" stroke="#5c5c5c" stroke-width="0.800"/><path d="M960.500,134 l4.500,0 -4.500,-4.500Z" fill="none" stroke="#5e5e5e" stroke-width="0.700"/><rect x="961" y="143.500" width="4" height="5.500" fill="none" stroke="#5e5e5e" stroke-width="0.700"/><rect x="1004" y="127.3" width="8.500" height="9.500" fill="#707070"/><path d="M1006.500,131.1 h3.500 l-1.750,2.200Z" fill="#9a9a9a"/><rect x="1004" y="141.8" width="8.500" height="9.500" fill="#707070"/><path d="M1006.500,145.60000000000002 h3.500 l-1.750,2.200Z" fill="#9a9a9a"/><rect x="1004" y="186.2" width="8.500" height="9.500" fill="#707070"/><path d="M1006.500,190.0 h3.500 l-1.750,2.200Z" fill="#9a9a9a"/><rect x="1004" y="200.9" width="8.500" height="9.500" fill="#707070"/><path d="M1006.500,204.70000000000002 h3.500 l-1.750,2.200Z" fill="#9a9a9a"/><rect x="928.600" y="159.800" width="113.600" height="10" fill="url(#gbar)" stroke="#2e2e2e" stroke-width="0.500"/><path d="M1049,163 h5.500 M1049.700,163 l0.500,6 h4 l0.500,-6 M1050.800,162 h2" stroke="#5e5e5e" stroke-width="0.700" fill="none"/><path d="M987,217.600 h10" stroke="#1e1e1e" stroke-width="1.400"/><path d="M796.500,366.5 l2,2 -2,2" fill="none" stroke="#aaa" stroke-width="0.800"/><path d="M796.500,411 l2,2 -2,2" fill="none" stroke="#444" stroke-width="0.800"/><path d="M796.500,423.7 l2,2 -2,2" fill="none" stroke="#444" stroke-width="0.800"/><path d="M796.500,436 l2,2 -2,2" fill="none" stroke="#444" stroke-width="0.800"/><path d="M704.500,331.500 v9 l2.200,-2 1.600,3.300 1.300,-0.600 -1.600,-3.300 2.900,-0.200Z" fill="#fff" stroke="#111" stroke-width="0.700"/><g transform="translate(0,0.6)"><rect x="25" y="577.500" width="7.500" height="7" fill="none" stroke="#555" stroke-width="0.700"/><path d="M43.500,579 h5 v4.500 h-5Z M46,577.500 l3.500,2" stroke="#ccc" stroke-width="0.900" fill="none"/><rect x="88.500" y="577.500" width="7" height="8" fill="#4a4a4a"/><path d="M90,580 h4 l-2,2.800Z" fill="#ddd"/><rect x="145.500" y="577.500" width="7" height="8" fill="#4a4a4a"/><path d="M147,580 h4 l-2,2.800Z" fill="#ddd"/><path d="M106,579 l-3,2.500 3,2.500Z M102.500,579 v5 M115,579 l-3,2.500 3,2.500Z M158,579 l3,2.500 -3,2.500Z M167,579 l3,2.500 -3,2.500Z M170.500,579 v5" fill="#5f5f5f" stroke="#5f5f5f" stroke-width="0.500"/><path d="M293.500,579 l3,2.500 -3,2.500Z" fill="#ddd"/><path d="M306.500,579 l-3,2.500 3,2.500Z" fill="#ddd"/><path d="M1047,579 l3,2.500 -3,2.500Z" fill="#ddd"/></g><g fill="#ededed"><ellipse cx="907" cy="532.500" rx="15" ry="12.700"/><path d="M897,541 l-2.500,6.500 7.500,-3.500Z"/></g><circle cx="901.500" cy="528.500" r="1.700" fill="#4d4b4c"/><circle cx="912.500" cy="528.500" r="1.700" fill="#4d4b4c"/><g fill="#ededed" stroke="#535152" stroke-width="1.200"><ellipse cx="921" cy="543" rx="13" ry="11"/></g><path d="M927,551.500 l5,4.500 -1,-6Z" fill="#ededed"/><circle cx="916.500" cy="539.500" r="1.400" fill="#4d4b4c"/><circle cx="925.500" cy="539.500" r="1.400" fill="#4d4b4c"/><g font-family="'Liberation Sans','Noto Sans CJK SC',sans-serif"><text x="4.8" y="11.4" font-size="12.5" fill="#e08a2e" textLength="9.2" lengthAdjust="spacingAndGlyphs">Ai</text><text x="26.5" y="10.6" font-size="7" fill="#d4d4d4" textLength="21.4" lengthAdjust="spacingAndGlyphs">文件(F)</text><text x="58.1" y="10.6" font-size="7" fill="#d4d4d4" textLength="21.8" lengthAdjust="spacingAndGlyphs">编辑(E)</text><text x="90.2" y="10.6" font-size="7" fill="#d4d4d4" textLength="23.2" lengthAdjust="spacingAndGlyphs">对象(O)</text><text x="123.6" y="10.6" font-size="7" fill="#d4d4d4" textLength="22.3" lengthAdjust="spacingAndGlyphs">文字(T)</text><text x="155.6" y="10.6" font-size="7" fill="#d4d4d4" textLength="21.8" lengthAdjust="spacingAndGlyphs">选择(S)</text><text x="188" y="10.6" font-size="7" fill="#d4d4d4" textLength="22.4" lengthAdjust="spacingAndGlyphs">效果(C)</text><text x="220.6" y="10.6" font-size="7" fill="#d4d4d4" textLength="22.7" lengthAdjust="spacingAndGlyphs">视图(V)</text><text x="253.4" y="10.6" font-size="7" fill="#d4d4d4" textLength="25.9" lengthAdjust="spacingAndGlyphs">窗口(W)</text><text x="289.1" y="10.6" font-size="7" fill="#d4d4d4" textLength="22.3" lengthAdjust="spacingAndGlyphs">帮助(H)</text><text x="920" y="9.6" font-size="6.5" fill="#c4c4c4">基本功能</text><text x="9.1" y="28.5" font-size="6.5" fill="#d0d0d0">混合对象</text><text x="62.1" y="28.7" font-size="7" fill="#e08a2e" textLength="30.4" lengthAdjust="spacingAndGlyphs">不透明度:</text><text x="99.9" y="28.7" font-size="6.6" fill="#262626" textLength="12.4" lengthAdjust="spacingAndGlyphs">100%</text><text x="418.5" y="28.7" font-size="6.6" fill="#262626" textLength="28.6" lengthAdjust="spacingAndGlyphs">426.527 m</text><text x="475.2" y="28.7" font-size="6.6" fill="#262626" textLength="28" lengthAdjust="spacingAndGlyphs">177.43 mm</text><text x="536.7" y="28.7" font-size="6.6" fill="#262626" textLength="27.7" lengthAdjust="spacingAndGlyphs">73.341 mm</text><text x="614.7" y="28.7" font-size="6.6" fill="#262626" textLength="25.7" lengthAdjust="spacingAndGlyphs">99.01 mm</text><text x="60.6" y="585" font-size="6.5" fill="#262626" textLength="11.9" lengthAdjust="spacingAndGlyphs">100%</text><text x="122.8" y="585" font-size="6.5" fill="#262626">1</text><text x="29" y="45.2" font-size="7.2" fill="#d8d8d8" textLength="119.8" lengthAdjust="spacingAndGlyphs">未标题-1* @ 100% (CMYK/GPU 预览)</text><text x="226.6" y="584.8" font-size="7" fill="#d0d0d0">选择</text><text x="775.6" y="117.2" font-size="6.6" fill="#e0e0e0">肤色</text><text x="741.7" y="156" font-size="7.2" fill="#9a9a9a">变换</text><text x="765.6" y="156" font-size="7.2" fill="#9a9a9a">对齐</text><text x="786.1" y="156" font-size="7.2" fill="#ececec">路径查找器</text><text x="741" y="168.6" font-size="6.9" fill="#dcdcdc" textLength="30.5" lengthAdjust="spacingAndGlyphs">形状模式:</text><text x="741" y="195.6" font-size="6.9" fill="#dcdcdc" textLength="37" lengthAdjust="spacingAndGlyphs">路径查找器:</text><text x="837.6" y="181.4" font-size="6.3" fill="#7e7e7e">扩展</text><text x="927.2" y="90.4" font-size="6.5" fill="#8e8e8e">描边</text><text x="951.7" y="90.4" font-size="7" fill="#f4f4f4">渐变</text><text x="974.7" y="90.4" font-size="6.2" fill="#8e8e8e">透明度</text><text x="953.9" y="105" font-size="7" fill="#f0f0f0" textLength="16.7" lengthAdjust="spacingAndGlyphs">类型:</text><text x="953.7" y="119.5" font-size="6.3" fill="#7c7c7c" textLength="14" lengthAdjust="spacingAndGlyphs">描边:</text><text x="941.6" y="193.6" font-size="6.8" fill="#8c8c8c" textLength="28.9" lengthAdjust="spacingAndGlyphs">不透明度:</text><text x="954.6" y="208.2" font-size="6.8" fill="#8c8c8c" textLength="15.4" lengthAdjust="spacingAndGlyphs">位置:</text><text x="724" y="342" font-size="6.8" fill="#1c1c1c" textLength="50.4" lengthAdjust="spacingAndGlyphs">还原置于顶层(U)</text><text x="724.2" y="355" font-size="6.8" fill="#9d9d9d" textLength="22.2" lengthAdjust="spacingAndGlyphs">重做(R)</text><text x="724.1" y="371" font-size="6.8" fill="#9d9d9d">透视</text><text x="724.1" y="387.2" font-size="6.8" fill="#1c1c1c">编组</text><text x="724.1" y="399.8" font-size="6.8" fill="#1c1c1c">建立剪切蒙版</text><text x="724.1" y="415.7" font-size="6.8" fill="#1c1c1c">变换</text><text x="724.1" y="428.4" font-size="6.8" fill="#1c1c1c">排列</text><text x="724.1" y="440.8" font-size="6.8" fill="#1c1c1c">选择</text><text x="938.5" y="549" font-size="25.5" fill="#f2f2f2" stroke="#f2f2f2" stroke-width="0.4">米你教育</text><text x="863.6" y="575" font-size="21.5" fill="#f0f0f0" stroke="#f0f0f0" stroke-width="0.35" textLength="200" lengthAdjust="spacingAndGlyphs">头条号 / PS视觉设计</text></g></svg></div></body></html>
